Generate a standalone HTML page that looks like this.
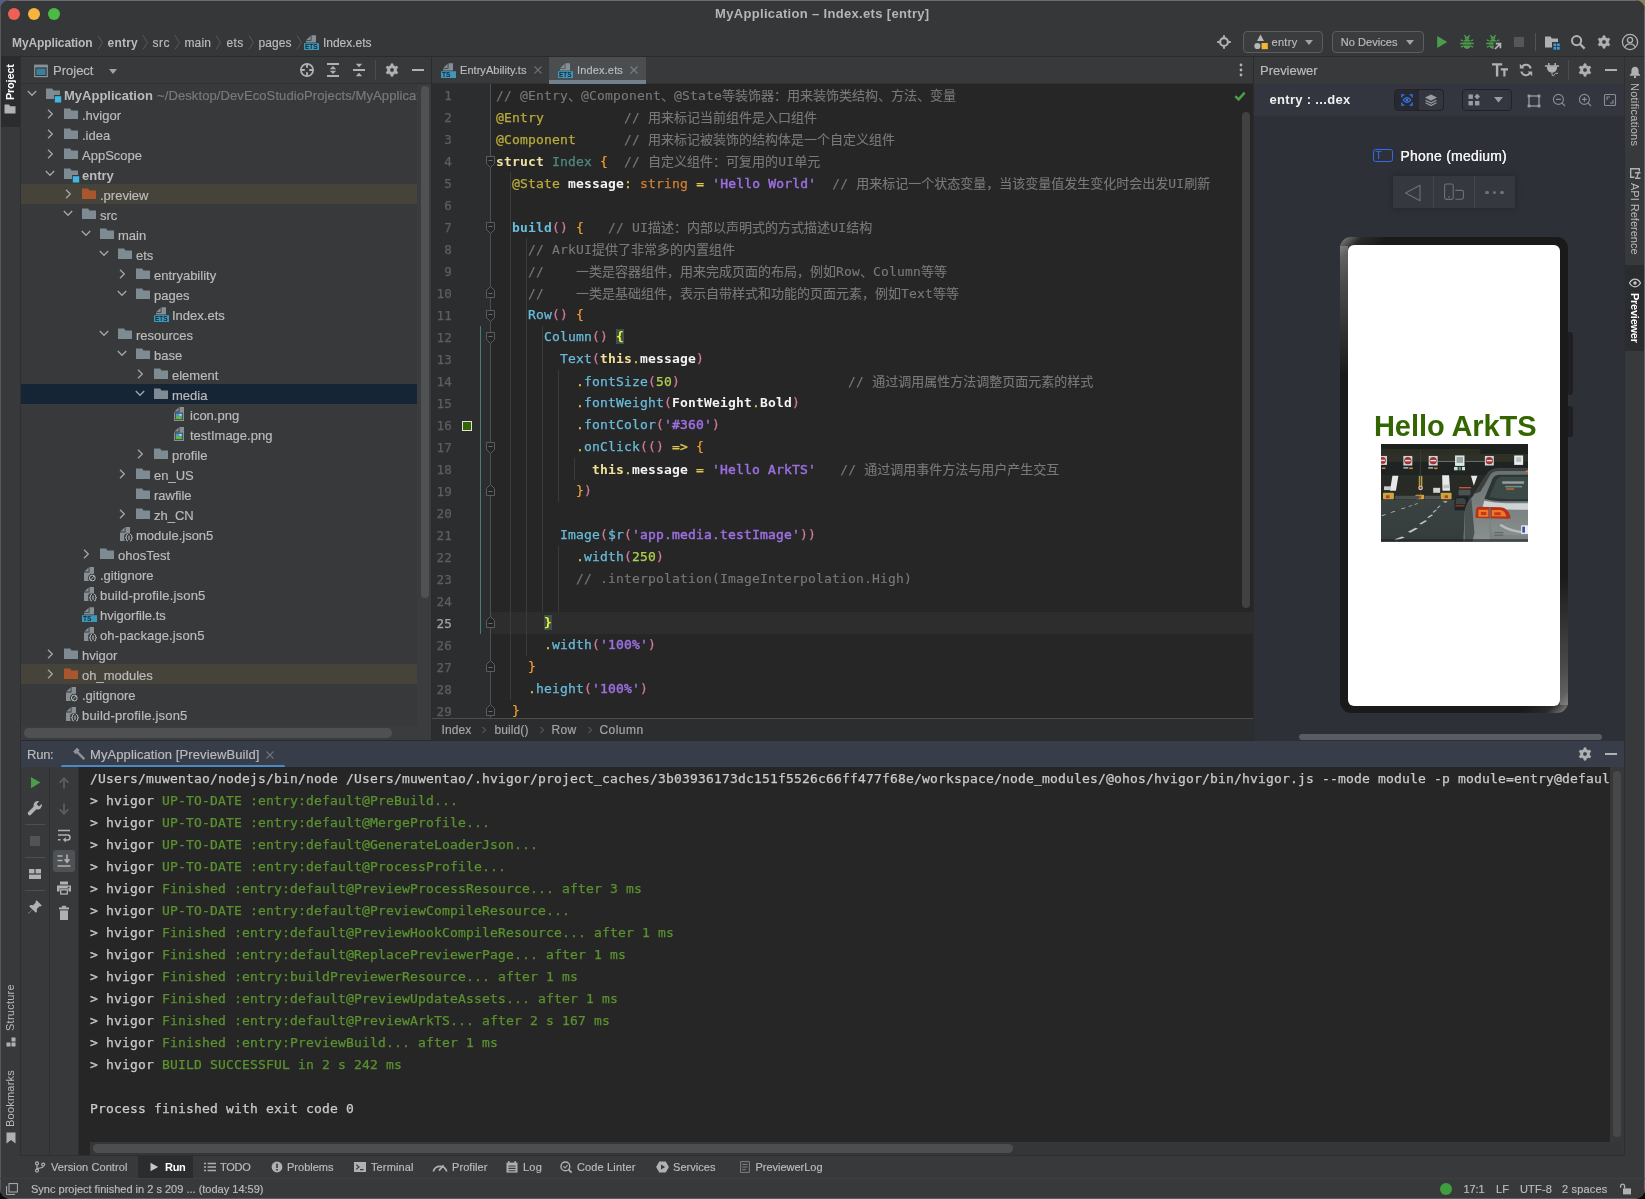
<!DOCTYPE html>
<html><head><meta charset="utf-8"><title>MyApplication – Index.ets [entry]</title>
<style>
*{box-sizing:border-box}
html,body{margin:0;padding:0;background:#0a0a0a;}
body{width:1645px;height:1199px;overflow:hidden;font-family:"Liberation Sans", "Noto Sans CJK SC", sans-serif;font-size:13px;color:#bbbbbb;}
#app{will-change:transform;position:relative;width:1645px;height:1199px;overflow:hidden;background:#38393b;border-radius:10px 10px 10px 10px;}
.b{position:absolute}
.t{position:absolute;white-space:pre;-webkit-text-stroke:0.18px currentColor}
.ic{position:absolute;overflow:visible}
.code,.con{position:absolute;white-space:pre;font-family:"DejaVu Sans Mono", "Liberation Mono", "Noto Sans CJK SC", monospace;font-size:13px;letter-spacing:0.174px;height:22px;line-height:22px;}
.code .c,.con .c{letter-spacing:0;font-family:"Noto Sans CJK SC",sans-serif}
.code,.con{-webkit-text-stroke:0.25px currentColor}
.vt{position:absolute;white-space:pre;transform-origin:0 0;font-size:11px;line-height:14px;}
</style></head>
<body><div style="position:absolute;left:0;top:0;width:12px;height:12px;background:#5c5c86"></div><div style="position:absolute;left:1633px;top:0;width:12px;height:12px;background:#8a8060"></div><div id="app">
<div class="b" style="left:0px;top:0px;width:1645px;height:28px;background:#363739;"></div>
<div class="b" style="left:8px;top:8px;width:12px;height:12px;border-radius:50%;background:#ee5f55"></div>
<div class="b" style="left:28px;top:8px;width:12px;height:12px;border-radius:50%;background:#f5b53c"></div>
<div class="b" style="left:48px;top:8px;width:12px;height:12px;border-radius:50%;background:#4aba45"></div>
<span class="t" style="left:715px;top:3.5px;line-height:20px;font-size:13px;color:#b4b5b6;font-weight:bold;-webkit-text-stroke:0;letter-spacing:0.327px;">MyApplication – Index.ets [entry]</span>
<div class="b" style="left:0px;top:28px;width:1645px;height:28px;background:#363739;"></div>
<div class="b" style="left:0px;top:56px;width:1645px;height:1px;background:#2a2b2d;"></div>
<span class="t" style="left:12px;top:32.5px;line-height:20px;font-size:12px;color:#bbbbbb;font-weight:bold;-webkit-text-stroke:0;letter-spacing:-0.117px;">MyApplication</span>
<span class="t" style="left:107.5px;top:32.5px;line-height:20px;font-size:12px;color:#bbbbbb;font-weight:bold;-webkit-text-stroke:0;letter-spacing:0.231px;">entry</span>
<span class="t" style="left:152.5px;top:32.5px;line-height:20px;font-size:12px;color:#bbbbbb;letter-spacing:0.500px;">src</span>
<span class="t" style="left:184.5px;top:32.5px;line-height:20px;font-size:12px;color:#bbbbbb;letter-spacing:0.121px;">main</span>
<span class="t" style="left:226.5px;top:32.5px;line-height:20px;font-size:12px;color:#bbbbbb;letter-spacing:0.328px;">ets</span>
<span class="t" style="left:258.5px;top:32.5px;line-height:20px;font-size:12px;color:#bbbbbb;letter-spacing:0.059px;">pages</span>
<span class="t" style="left:323px;top:32.5px;line-height:20px;font-size:12px;color:#bbbbbb;letter-spacing:-0.023px;">Index.ets</span>
<svg class="ic" style="left:96.5px;top:35px" width="7" height="15" viewBox="0 0 7 15" ><path d="M1 .5 5.500 7.500 1 14.500" fill="none" stroke="#58595b" stroke-width="1"/></svg>
<svg class="ic" style="left:141.5px;top:35px" width="7" height="15" viewBox="0 0 7 15" ><path d="M1 .5 5.500 7.500 1 14.500" fill="none" stroke="#58595b" stroke-width="1"/></svg>
<svg class="ic" style="left:173.5px;top:35px" width="7" height="15" viewBox="0 0 7 15" ><path d="M1 .5 5.500 7.500 1 14.500" fill="none" stroke="#58595b" stroke-width="1"/></svg>
<svg class="ic" style="left:215px;top:35px" width="7" height="15" viewBox="0 0 7 15" ><path d="M1 .5 5.500 7.500 1 14.500" fill="none" stroke="#58595b" stroke-width="1"/></svg>
<svg class="ic" style="left:247.5px;top:35px" width="7" height="15" viewBox="0 0 7 15" ><path d="M1 .5 5.500 7.500 1 14.500" fill="none" stroke="#58595b" stroke-width="1"/></svg>
<svg class="ic" style="left:295.5px;top:35px" width="7" height="15" viewBox="0 0 7 15" ><path d="M1 .5 5.500 7.500 1 14.500" fill="none" stroke="#58595b" stroke-width="1"/></svg>
<svg class="ic" style="left:303.3px;top:34.5px" width="16" height="16" viewBox="0 0 16 16" ><path d="M8.5 .3H13v7.3H3V5.800h5.500z" fill="#858f95"/><path d="M3.400 4.900 7.600 .700V4.900z" fill="#858f95"/><rect x="1" y="8.2" width="15" height="6.8" fill="#3f96b8"/><text x="2" y="14.1" font-family="Liberation Sans,sans-serif" font-size="6.6" font-weight="bold" fill="#0f2c3a" textLength="12.6" lengthAdjust="spacingAndGlyphs">ETS</text></svg>
<svg class="ic" style="left:1216px;top:34px" width="16" height="16" viewBox="0 0 16 16" ><circle cx="8" cy="8" r="3.900" fill="none" stroke="#afb1b3" stroke-width="2.100"/><path d="M8 1.200v2.400M8 12.400v2.400M1.200 8h2.400M12.400 8h2.400" stroke="#afb1b3" stroke-width="2"/></svg>
<div class="b" style="left:1243px;top:31px;width:80px;height:22px;border:1px solid #5b5d5f;border-radius:4px;background:#3a3c3e"></div>
<svg class="ic" style="left:1252.5px;top:34px" width="16" height="16" viewBox="0 0 16 16" ><path d="M7.500 .600 11 7H4z" fill="#b4b6b8"/><circle cx="4.400" cy="12" r="3.100" fill="#b4b6b8"/><rect x="8.600" y="9" width="6.200" height="6.200" fill="#f0b92e"/></svg>
<span class="t" style="left:1271.5px;top:32.3px;line-height:20px;font-size:11px;color:#bbbbbb;letter-spacing:0.306px;">entry</span>
<svg class="ic" style="left:1305px;top:40px" width="8" height="5" viewBox="0 0 8 5" ><path d="M0 0h8L4.0 5z" fill="#a0a2a4"/></svg>
<div class="b" style="left:1332px;top:31px;width:92px;height:22px;border:1px solid #5b5d5f;border-radius:4px;background:#3a3c3e"></div>
<span class="t" style="left:1340.7px;top:32.3px;line-height:20px;font-size:11px;color:#bbbbbb;letter-spacing:0.055px;">No Devices</span>
<svg class="ic" style="left:1406px;top:40px" width="8" height="5" viewBox="0 0 8 5" ><path d="M0 0h8L4.0 5z" fill="#a0a2a4"/></svg>
<svg class="ic" style="left:1433.5px;top:34px" width="16" height="16" viewBox="0 0 16 16" ><path d="M3.2 2 13.200 8 3.200 14z" fill="#4c9c4c"/></svg>
<svg class="ic" style="left:1459px;top:34.3px" width="16" height="16" viewBox="0 0 16 16" ><path d="M5.400 1.200 6.900 3.400M10.600 1.200 9.100 3.400" stroke="#4c9c4c" stroke-width="1.200"/><path d="M5.600 4.700a2.400 2.200 0 0 1 4.800 0z" fill="#4c9c4c"/><ellipse cx="8" cy="10" rx="4.100" ry="4.900" fill="#4c9c4c"/><path d="M3.500 7.900h9M3.500 11h9" stroke="#38393b" stroke-width="0.900"/><path d="M1.800 5.800 4.300 7M1.200 9.500h3M1.800 13.200 4.300 12M14.200 5.800 11.700 7M14.800 9.500h-3" stroke="#4c9c4c" stroke-width="1.300"/><path d="M14.200 13.200 11.700 12" stroke="#4c9c4c" stroke-width="1.300"/></svg>
<svg class="ic" style="left:1485px;top:34.3px" width="18" height="16" viewBox="0 0 18 16" ><path d="M5.400 1.200 6.900 3.400M10.600 1.200 9.100 3.400" stroke="#4c9c4c" stroke-width="1.200"/><path d="M5.600 4.700a2.400 2.200 0 0 1 4.800 0z" fill="#4c9c4c"/><ellipse cx="8" cy="10" rx="4.100" ry="4.900" fill="#4c9c4c"/><path d="M3.500 7.900h9M3.500 11h9" stroke="#38393b" stroke-width="0.900"/><path d="M1.800 5.800 4.300 7M1.200 9.500h3M1.800 13.200 4.300 12M14.200 5.800 11.700 7M14.800 9.500h-3" stroke="#4c9c4c" stroke-width="1.300"/><rect x="8.600" y="8" width="9" height="8" fill="#38393b"/><path d="M10 15 15 10M10.800 9.600H15.400V14.200" fill="none" stroke="#b4b6b8" stroke-width="1.700"/></svg>
<svg class="ic" style="left:1514px;top:37px" width="10" height="10" viewBox="0 0 10 10" ><rect width="10" height="10" fill="#555759"/></svg>
<div class="b" style="left:1535px;top:33px;width:1px;height:18px;background:#515355;"></div>
<svg class="ic" style="left:1543.5px;top:34px" width="16" height="16" viewBox="0 0 16 16" ><path d="M1 2.5h5.6l1.2 2H14v3.5H8v5.5H1z" fill="#afb1b3"/><rect x="9.5" y="9.5" width="2.7" height="2.7" fill="#3d9bd8"/><rect x="13" y="9.5" width="2.7" height="2.7" fill="#3d9bd8"/><rect x="9.5" y="13" width="2.7" height="2.7" fill="#3d9bd8"/><rect x="13" y="13" width="2.7" height="2.7" fill="#3d9bd8"/></svg>
<svg class="ic" style="left:1569.5px;top:34px" width="16" height="16" viewBox="0 0 16 16" ><circle cx="6.6" cy="6.6" r="4.6" fill="none" stroke="#afb1b3" stroke-width="2"/><path d="M10 10l4.6 4.6" stroke="#afb1b3" stroke-width="2.4"/></svg>
<svg class="ic" style="left:1595.5px;top:34px" width="16" height="16" viewBox="0 0 16 16" ><path d="M6.69 3.49 L7.01 1.78 L8.99 1.78 L9.31 3.49 L11.25 4.61 L12.90 4.04 L13.88 5.74 L12.56 6.88 L12.56 9.12 L13.88 10.26 L12.90 11.96 L11.25 11.39 L9.31 12.51 L8.99 14.22 L7.01 14.22 L6.69 12.51 L4.75 11.39 L3.10 11.96 L2.12 10.26 L3.44 9.12 L3.44 6.88 L2.12 5.74 L3.10 4.04 L4.75 4.61Z M8 5.8a2.2 2.2 0 1 0 0 4.4 2.2 2.2 0 1 0 0-4.4z" fill="#afb1b3" fill-rule="evenodd" stroke="#afb1b3" stroke-width="0.6" stroke-linejoin="round"/></svg>
<svg class="ic" style="left:1621px;top:33px" width="18" height="18" viewBox="0 0 18 18" ><circle cx="9" cy="9" r="7.6" fill="none" stroke="#afb1b3" stroke-width="1.3"/><circle cx="9" cy="7" r="2.6" fill="none" stroke="#afb1b3" stroke-width="1.3"/><path d="M3.8 14.2c1-2.6 3-3.4 5.2-3.4s4.2.8 5.2 3.4" fill="none" stroke="#afb1b3" stroke-width="1.3"/></svg>
<div class="b" style="left:0px;top:57px;width:21px;height:1099px;background:#38393b;"></div>
<div class="b" style="left:20px;top:57px;width:1px;height:1099px;background:#2e2f31;"></div>
<div class="b" style="left:1px;top:57px;width:19px;height:70px;background:#2b2c2e;"></div>
<span class="vt" style="left:2.7px;top:99.5px;transform:rotate(-90deg);color:#ffffff;font-weight:bold;letter-spacing:-0.25px;" >Project</span>
<svg class="ic" style="left:4px;top:103px" width="12" height="12" viewBox="0 0 12 12" ><path d="M0.5 1.5h4.6l1 1.8H11.5v7.2H0.5z" fill="#afb1b3"/></svg>
<span class="vt" style="left:2.7px;top:1031px;transform:rotate(-90deg);color:#bbbbbb;letter-spacing:0.25px;" >Structure</span>
<svg class="ic" style="left:5.5px;top:1036.5px" width="10" height="10" viewBox="0 0 10 10" ><rect x="5.5" y="0.5" width="4" height="4" fill="#afb1b3"/><rect x="0.5" y="5.5" width="4" height="4" fill="#afb1b3"/><rect x="5.5" y="5.5" width="4" height="4" fill="#afb1b3"/></svg>
<span class="vt" style="left:2.7px;top:1127px;transform:rotate(-90deg);color:#bbbbbb;letter-spacing:0.22px;" >Bookmarks</span>
<svg class="ic" style="left:5.5px;top:1131.5px" width="10" height="12" viewBox="0 0 10 12" ><path d="M0.5 0.5h9v11L5 8 0.5 11.5z" fill="#afb1b3"/></svg>
<div class="b" style="left:1625px;top:57px;width:20px;height:1099px;background:#38393b;"></div>
<div class="b" style="left:1624px;top:57px;width:1px;height:1099px;background:#2e2f31;"></div>
<div class="b" style="left:1625px;top:265px;width:20px;height:86px;background:#2b2c2e;"></div>
<svg class="ic" style="left:1628.5px;top:66px" width="12" height="12" viewBox="0 0 12 12" ><path d="M6 0.8c2.4 0 3.6 1.8 3.6 4v2.4l1.6 1.8v.8H.8V9l1.6-1.8V4.8C2.4 2.6 3.6.8 6 .8z" fill="#afb1b3"/><circle cx="6" cy="11" r="1.2" fill="#afb1b3"/></svg>
<span class="vt" style="left:1641.5px;top:83px;transform:rotate(90deg);color:#bbbbbb;letter-spacing:0.25px;">Notifications</span>
<svg class="ic" style="left:1628.5px;top:166.5px" width="12" height="12" viewBox="0 0 12 12" ><path d="M1 1h10v3.5h-1.4V2.4H2.4v7.2h3V11H1z M6 5h5.5v1.4H9.8L8.7 10.6h2.8V12H6v-1.4h1.3L8.4 6.4H6z" fill="#afb1b3"/></svg>
<span class="vt" style="left:1641.5px;top:183px;transform:rotate(90deg);color:#bbbbbb;letter-spacing:0px;">API Reference</span>
<svg class="ic" style="left:1628.5px;top:276.5px" width="12" height="12" viewBox="0 0 12 12" ><path d="M0.5 6C2 3.4 3.8 2.2 6 2.2S10 3.4 11.5 6C10 8.6 8.2 9.8 6 9.8S2 8.6.5 6z" fill="none" stroke="#c8cacc" stroke-width="1.2"/><circle cx="6" cy="6" r="1.7" fill="#c8cacc"/></svg>
<span class="vt" style="left:1641.5px;top:293px;transform:rotate(90deg);color:#ffffff;letter-spacing:-0.25px;font-weight:bold;">Previewer</span>
<div class="b" style="left:21px;top:57px;width:410px;height:27px;background:#38393b;"></div>
<div class="b" style="left:21px;top:83px;width:410px;height:1px;background:#2f3032;"></div>
<div class="b" style="left:431px;top:57px;width:1px;height:684px;background:#2a2b2d;"></div>
<svg class="ic" style="left:33px;top:62.5px" width="16" height="16" viewBox="0 0 16 16" ><rect x="1.700" y="2.200" width="12.600" height="11.400" fill="none" stroke="#8a949b" stroke-width="1.200"/><rect x="1.700" y="2.200" width="12.600" height="2.200" fill="#8a949b"/><rect x="3.400" y="5.600" width="9.200" height="6.400" fill="#3a7f9e"/></svg>
<span class="t" style="left:53px;top:60.5px;line-height:20px;font-size:13px;color:#bbbbbb;letter-spacing:0.004px;">Project</span>
<svg class="ic" style="left:109px;top:68.5px" width="8" height="5" viewBox="0 0 8 5" ><path d="M0 0h8L4.0 5z" fill="#a0a2a4"/></svg>
<svg class="ic" style="left:298.5px;top:62px" width="16" height="16" viewBox="0 0 16 16" ><circle cx="8" cy="8" r="6.100" fill="none" stroke="#afb1b3" stroke-width="1.700"/><path d="M8 1.500v4.300M8 10.200v4.300M1.500 8h4.300M10.200 8h4.300" stroke="#afb1b3" stroke-width="1.900"/></svg>
<svg class="ic" style="left:325px;top:62px" width="16" height="16" viewBox="0 0 16 16" ><path d="M2 2h12M2 14h12" stroke="#afb1b3" stroke-width="2"/><path d="M8 4.100 11.200 7.300H4.800zM8 11.900 11.200 8.700H4.800z" fill="#afb1b3"/></svg>
<svg class="ic" style="left:351px;top:62px" width="16" height="16" viewBox="0 0 16 16" ><path d="M2 8h12" stroke="#afb1b3" stroke-width="2"/><path d="M4.800 1.800h6.400L8 5.200zM4.800 14.200h6.400L8 10.800z" fill="#afb1b3"/></svg>
<div class="b" style="left:375px;top:60px;width:1px;height:20px;background:#4c4d4a;"></div>
<svg class="ic" style="left:384px;top:62px" width="16" height="16" viewBox="0 0 16 16" ><path d="M6.69 3.49 L7.01 1.78 L8.99 1.78 L9.31 3.49 L11.25 4.61 L12.90 4.04 L13.88 5.74 L12.56 6.88 L12.56 9.12 L13.88 10.26 L12.90 11.96 L11.25 11.39 L9.31 12.51 L8.99 14.22 L7.01 14.22 L6.69 12.51 L4.75 11.39 L3.10 11.96 L2.12 10.26 L3.44 9.12 L3.44 6.88 L2.12 5.74 L3.10 4.04 L4.75 4.61Z M8 5.8a2.2 2.2 0 1 0 0 4.4 2.2 2.2 0 1 0 0-4.4z" fill="#afb1b3" fill-rule="evenodd" stroke="#afb1b3" stroke-width="0.6" stroke-linejoin="round"/></svg>
<svg class="ic" style="left:410px;top:62px" width="16" height="16" viewBox="0 0 16 16" ><rect x="2" y="7" width="12" height="2" fill="#afb1b3"/></svg>
<svg class="ic" style="left:26.4px;top:87.3px" width="12" height="12" viewBox="0 0 12 12" ><path d="M1.8 4 6 8.3 10.2 4" fill="none" stroke="#a4a6a8" stroke-width="1.3"/></svg>
<svg class="ic" style="left:45px;top:85.8px" width="16" height="16" viewBox="0 0 16 16" ><path d="M1 2.500h6.200l1.200 2H15v4.600H9v4H1z" fill="#7f8b93"/><rect x="9.800" y="10.200" width="6.400" height="6.300" fill="#40b6e0"/></svg>
<span class="t" style="left:64px;top:85.5px;line-height:20px;font-size:13px;color:#bbbbbb;font-weight:bold;-webkit-text-stroke:0;">MyApplication</span>
<svg class="ic" style="left:44.2px;top:107.5px" width="12" height="12" viewBox="0 0 12 12" ><path d="M4 1.8 8.3 6 4 10.2" fill="none" stroke="#a4a6a8" stroke-width="1.3"/></svg>
<svg class="ic" style="left:63px;top:105.8px" width="16" height="16" viewBox="0 0 16 16" ><path d="M1 2.500h6.200l1.200 2H15v8.600H1z" fill="#7f8b93"/></svg>
<span class="t" style="left:82px;top:105.5px;line-height:20px;font-size:13px;color:#bbbbbb;">.hvigor</span>
<svg class="ic" style="left:44.2px;top:127.5px" width="12" height="12" viewBox="0 0 12 12" ><path d="M4 1.8 8.3 6 4 10.2" fill="none" stroke="#a4a6a8" stroke-width="1.3"/></svg>
<svg class="ic" style="left:63px;top:125.8px" width="16" height="16" viewBox="0 0 16 16" ><path d="M1 2.500h6.200l1.200 2H15v8.600H1z" fill="#7f8b93"/></svg>
<span class="t" style="left:82px;top:125.5px;line-height:20px;font-size:13px;color:#bbbbbb;">.idea</span>
<svg class="ic" style="left:44.2px;top:147.5px" width="12" height="12" viewBox="0 0 12 12" ><path d="M4 1.8 8.3 6 4 10.2" fill="none" stroke="#a4a6a8" stroke-width="1.3"/></svg>
<svg class="ic" style="left:63px;top:145.8px" width="16" height="16" viewBox="0 0 16 16" ><path d="M1 2.500h6.200l1.200 2H15v8.600H1z" fill="#7f8b93"/></svg>
<span class="t" style="left:82px;top:145.5px;line-height:20px;font-size:13px;color:#bbbbbb;">AppScope</span>
<svg class="ic" style="left:44.4px;top:167.3px" width="12" height="12" viewBox="0 0 12 12" ><path d="M1.8 4 6 8.3 10.2 4" fill="none" stroke="#a4a6a8" stroke-width="1.3"/></svg>
<svg class="ic" style="left:63px;top:165.8px" width="16" height="16" viewBox="0 0 16 16" ><path d="M1 2.500h6.200l1.200 2H15v4.600H9v4H1z" fill="#7f8b93"/><rect x="9.800" y="10.200" width="6.400" height="6.300" fill="#40b6e0"/></svg>
<span class="t" style="left:82px;top:165.5px;line-height:20px;font-size:13px;color:#bbbbbb;font-weight:bold;-webkit-text-stroke:0;">entry</span>
<div class="b" style="left:21px;top:184px;width:397px;height:20px;background:#46433b;"></div>
<svg class="ic" style="left:62.2px;top:187.5px" width="12" height="12" viewBox="0 0 12 12" ><path d="M4 1.8 8.3 6 4 10.2" fill="none" stroke="#a4a6a8" stroke-width="1.3"/></svg>
<svg class="ic" style="left:81px;top:185.8px" width="16" height="16" viewBox="0 0 16 16" ><path d="M1 2.500h6.200l1.200 2H15v8.600H1z" fill="#a9562f"/></svg>
<span class="t" style="left:100px;top:185.5px;line-height:20px;font-size:13px;color:#bbbbbb;">.preview</span>
<svg class="ic" style="left:62.4px;top:207.3px" width="12" height="12" viewBox="0 0 12 12" ><path d="M1.8 4 6 8.3 10.2 4" fill="none" stroke="#a4a6a8" stroke-width="1.3"/></svg>
<svg class="ic" style="left:81px;top:205.8px" width="16" height="16" viewBox="0 0 16 16" ><path d="M1 2.500h6.200l1.200 2H15v8.600H1z" fill="#7f8b93"/></svg>
<span class="t" style="left:100px;top:205.5px;line-height:20px;font-size:13px;color:#bbbbbb;">src</span>
<svg class="ic" style="left:80.4px;top:227.3px" width="12" height="12" viewBox="0 0 12 12" ><path d="M1.8 4 6 8.3 10.2 4" fill="none" stroke="#a4a6a8" stroke-width="1.3"/></svg>
<svg class="ic" style="left:99px;top:225.8px" width="16" height="16" viewBox="0 0 16 16" ><path d="M1 2.500h6.200l1.200 2H15v8.600H1z" fill="#7f8b93"/></svg>
<span class="t" style="left:118px;top:225.5px;line-height:20px;font-size:13px;color:#bbbbbb;">main</span>
<svg class="ic" style="left:98.4px;top:247.3px" width="12" height="12" viewBox="0 0 12 12" ><path d="M1.8 4 6 8.3 10.2 4" fill="none" stroke="#a4a6a8" stroke-width="1.3"/></svg>
<svg class="ic" style="left:117px;top:245.8px" width="16" height="16" viewBox="0 0 16 16" ><path d="M1 2.500h6.200l1.200 2H15v8.600H1z" fill="#7f8b93"/></svg>
<span class="t" style="left:136px;top:245.5px;line-height:20px;font-size:13px;color:#bbbbbb;">ets</span>
<svg class="ic" style="left:116.2px;top:267.5px" width="12" height="12" viewBox="0 0 12 12" ><path d="M4 1.8 8.3 6 4 10.2" fill="none" stroke="#a4a6a8" stroke-width="1.3"/></svg>
<svg class="ic" style="left:135px;top:265.8px" width="16" height="16" viewBox="0 0 16 16" ><path d="M1 2.500h6.200l1.200 2H15v8.600H1z" fill="#7f8b93"/></svg>
<span class="t" style="left:154px;top:265.5px;line-height:20px;font-size:13px;color:#bbbbbb;">entryability</span>
<svg class="ic" style="left:116.4px;top:287.3px" width="12" height="12" viewBox="0 0 12 12" ><path d="M1.8 4 6 8.3 10.2 4" fill="none" stroke="#a4a6a8" stroke-width="1.3"/></svg>
<svg class="ic" style="left:135px;top:285.8px" width="16" height="16" viewBox="0 0 16 16" ><path d="M1 2.500h6.200l1.200 2H15v8.600H1z" fill="#7f8b93"/></svg>
<span class="t" style="left:154px;top:285.5px;line-height:20px;font-size:13px;color:#bbbbbb;">pages</span>
<svg class="ic" style="left:153px;top:306.5px" width="16" height="16" viewBox="0 0 16 16" ><path d="M8.5 .3H13v7.3H3V5.800h5.500z" fill="#858f95"/><path d="M3.400 4.900 7.600 .700V4.900z" fill="#858f95"/><rect x="1" y="8.2" width="15" height="6.8" fill="#3f96b8"/><text x="2" y="14.1" font-family="Liberation Sans,sans-serif" font-size="6.6" font-weight="bold" fill="#0f2c3a" textLength="12.6" lengthAdjust="spacingAndGlyphs">ETS</text></svg>
<span class="t" style="left:172px;top:305.5px;line-height:20px;font-size:13px;color:#bbbbbb;">Index.ets</span>
<svg class="ic" style="left:98.4px;top:327.3px" width="12" height="12" viewBox="0 0 12 12" ><path d="M1.8 4 6 8.3 10.2 4" fill="none" stroke="#a4a6a8" stroke-width="1.3"/></svg>
<svg class="ic" style="left:117px;top:325.8px" width="16" height="16" viewBox="0 0 16 16" ><path d="M1 2.500h6.200l1.200 2H15v8.600H1z" fill="#7f8b93"/></svg>
<span class="t" style="left:136px;top:325.5px;line-height:20px;font-size:13px;color:#bbbbbb;">resources</span>
<svg class="ic" style="left:116.4px;top:347.3px" width="12" height="12" viewBox="0 0 12 12" ><path d="M1.8 4 6 8.3 10.2 4" fill="none" stroke="#a4a6a8" stroke-width="1.3"/></svg>
<svg class="ic" style="left:135px;top:345.8px" width="16" height="16" viewBox="0 0 16 16" ><path d="M1 2.500h6.200l1.200 2H15v8.600H1z" fill="#7f8b93"/></svg>
<span class="t" style="left:154px;top:345.5px;line-height:20px;font-size:13px;color:#bbbbbb;">base</span>
<svg class="ic" style="left:134.2px;top:367.5px" width="12" height="12" viewBox="0 0 12 12" ><path d="M4 1.8 8.3 6 4 10.2" fill="none" stroke="#a4a6a8" stroke-width="1.3"/></svg>
<svg class="ic" style="left:153px;top:365.8px" width="16" height="16" viewBox="0 0 16 16" ><path d="M1 2.500h6.200l1.200 2H15v8.600H1z" fill="#7f8b93"/></svg>
<span class="t" style="left:172px;top:365.5px;line-height:20px;font-size:13px;color:#bbbbbb;">element</span>
<div class="b" style="left:21px;top:384px;width:397px;height:20px;background:#162536;"></div>
<svg class="ic" style="left:134.4px;top:387.3px" width="12" height="12" viewBox="0 0 12 12" ><path d="M1.8 4 6 8.3 10.2 4" fill="none" stroke="#a4a6a8" stroke-width="1.3"/></svg>
<svg class="ic" style="left:153px;top:385.8px" width="16" height="16" viewBox="0 0 16 16" ><path d="M1 2.500h6.200l1.200 2H15v8.600H1z" fill="#7f8b93"/></svg>
<span class="t" style="left:172px;top:385.5px;line-height:20px;font-size:13px;color:#bbbbbb;">media</span>
<svg class="ic" style="left:171px;top:405.5px" width="16" height="16" viewBox="0 0 16 16" ><path d="M8.5 1H13v14H3V6.5h5.5z" fill="#858f95"/><path d="M3.4 5.6 7.6 1.4V5.6z" fill="#858f95"/><rect x="4" y="6.800" width="8" height="7.200" fill="#3a3f43"/><rect x="4.700" y="7.500" width="6.600" height="3.600" fill="#3f9fd0"/><path d="M4.700 13.300v-2.400c1.800-1.400 4-1 6.600.800v1.600z" fill="#62b543"/><rect x="8.400" y="8.200" width="2.200" height="1.300" fill="#dcebf2"/></svg>
<span class="t" style="left:190px;top:405.5px;line-height:20px;font-size:13px;color:#bbbbbb;">icon.png</span>
<svg class="ic" style="left:171px;top:425.5px" width="16" height="16" viewBox="0 0 16 16" ><path d="M8.5 1H13v14H3V6.5h5.5z" fill="#858f95"/><path d="M3.4 5.6 7.6 1.4V5.6z" fill="#858f95"/><rect x="4" y="6.800" width="8" height="7.200" fill="#3a3f43"/><rect x="4.700" y="7.500" width="6.600" height="3.600" fill="#3f9fd0"/><path d="M4.700 13.300v-2.400c1.800-1.400 4-1 6.600.800v1.600z" fill="#62b543"/><rect x="8.400" y="8.200" width="2.200" height="1.300" fill="#dcebf2"/></svg>
<span class="t" style="left:190px;top:425.5px;line-height:20px;font-size:13px;color:#bbbbbb;">testImage.png</span>
<svg class="ic" style="left:134.2px;top:447.5px" width="12" height="12" viewBox="0 0 12 12" ><path d="M4 1.8 8.3 6 4 10.2" fill="none" stroke="#a4a6a8" stroke-width="1.3"/></svg>
<svg class="ic" style="left:153px;top:445.8px" width="16" height="16" viewBox="0 0 16 16" ><path d="M1 2.500h6.200l1.200 2H15v8.600H1z" fill="#7f8b93"/></svg>
<span class="t" style="left:172px;top:445.5px;line-height:20px;font-size:13px;color:#bbbbbb;">profile</span>
<svg class="ic" style="left:116.2px;top:467.5px" width="12" height="12" viewBox="0 0 12 12" ><path d="M4 1.8 8.3 6 4 10.2" fill="none" stroke="#a4a6a8" stroke-width="1.3"/></svg>
<svg class="ic" style="left:135px;top:465.8px" width="16" height="16" viewBox="0 0 16 16" ><path d="M1 2.500h6.200l1.200 2H15v8.600H1z" fill="#7f8b93"/></svg>
<span class="t" style="left:154px;top:465.5px;line-height:20px;font-size:13px;color:#bbbbbb;">en_US</span>
<svg class="ic" style="left:135px;top:485.8px" width="16" height="16" viewBox="0 0 16 16" ><path d="M1 2.500h6.200l1.200 2H15v8.600H1z" fill="#7f8b93"/></svg>
<span class="t" style="left:154px;top:485.5px;line-height:20px;font-size:13px;color:#bbbbbb;">rawfile</span>
<svg class="ic" style="left:116.2px;top:507.5px" width="12" height="12" viewBox="0 0 12 12" ><path d="M4 1.8 8.3 6 4 10.2" fill="none" stroke="#a4a6a8" stroke-width="1.3"/></svg>
<svg class="ic" style="left:135px;top:505.8px" width="16" height="16" viewBox="0 0 16 16" ><path d="M1 2.500h6.200l1.200 2H15v8.600H1z" fill="#7f8b93"/></svg>
<span class="t" style="left:154px;top:505.5px;line-height:20px;font-size:13px;color:#bbbbbb;">zh_CN</span>
<svg class="ic" style="left:117px;top:525.5px" width="16" height="16" viewBox="0 0 16 16" ><path d="M8.5 1H13v14H3V6.5h5.5z" fill="#858f95"/><path d="M3.4 5.6 7.6 1.4V5.6z" fill="#858f95"/><rect x="7.2" y="7.6" width="9" height="8" rx="2.5" fill="#38393b"/><path d="M10.9 8.5c-1.3 0-1.5.6-1.5 1.4v.9c0 .6-.4.9-1 .9.6 0 1 .3 1 .9v.9c0 .8.2 1.4 1.5 1.4M13.100 8.500c1.300 0 1.500.600 1.500 1.400v.900c0 .600.400.900 1 .900-.600 0-1 .300-1 .900v.900c0 .800-.200 1.400-1.500 1.400" fill="none" stroke="#c4c8cb" stroke-width="1"/><path d="M12 9.600v4.200" stroke="#c4c8cb" stroke-width="1"/></svg>
<span class="t" style="left:136px;top:525.5px;line-height:20px;font-size:13px;color:#bbbbbb;">module.json5</span>
<svg class="ic" style="left:80.2px;top:547.5px" width="12" height="12" viewBox="0 0 12 12" ><path d="M4 1.8 8.3 6 4 10.2" fill="none" stroke="#a4a6a8" stroke-width="1.3"/></svg>
<svg class="ic" style="left:99px;top:545.8px" width="16" height="16" viewBox="0 0 16 16" ><path d="M1 2.500h6.200l1.200 2H15v8.600H1z" fill="#7f8b93"/></svg>
<span class="t" style="left:118px;top:545.5px;line-height:20px;font-size:13px;color:#bbbbbb;">ohosTest</span>
<svg class="ic" style="left:81px;top:565.5px" width="16" height="16" viewBox="0 0 16 16" ><path d="M8.5 1H13v14H3V6.5h5.5z" fill="#858f95"/><path d="M3.4 5.6 7.6 1.4V5.6z" fill="#858f95"/><circle cx="11.3" cy="12" r="4.300" fill="#38393b"/><circle cx="11.3" cy="12" r="2.900" fill="none" stroke="#c4c8cb" stroke-width="0.900"/><path d="M9.300 14 13.300 10" stroke="#c4c8cb" stroke-width="0.900"/></svg>
<span class="t" style="left:100px;top:565.5px;line-height:20px;font-size:13px;color:#bbbbbb;">.gitignore</span>
<svg class="ic" style="left:81px;top:585.5px" width="16" height="16" viewBox="0 0 16 16" ><path d="M8.5 1H13v14H3V6.5h5.5z" fill="#858f95"/><path d="M3.4 5.6 7.6 1.4V5.6z" fill="#858f95"/><rect x="7.2" y="7.6" width="9" height="8" rx="2.5" fill="#38393b"/><path d="M10.9 8.5c-1.3 0-1.5.6-1.5 1.4v.9c0 .6-.4.9-1 .9.6 0 1 .3 1 .9v.9c0 .8.2 1.4 1.5 1.4M13.100 8.500c1.300 0 1.500.600 1.500 1.400v.900c0 .600.400.900 1 .900-.600 0-1 .300-1 .900v.900c0 .800-.200 1.400-1.500 1.400" fill="none" stroke="#c4c8cb" stroke-width="1"/><path d="M12 9.600v4.200" stroke="#c4c8cb" stroke-width="1"/></svg>
<span class="t" style="left:100px;top:585.5px;line-height:20px;font-size:13px;color:#bbbbbb;letter-spacing:0.189px;">build-profile.json5</span>
<svg class="ic" style="left:81px;top:606.5px" width="16" height="16" viewBox="0 0 16 16" ><path d="M8.5 .3H13v7.3H3V5.800h5.500z" fill="#858f95"/><path d="M3.400 4.900 7.600 .700V4.900z" fill="#858f95"/><rect x="1" y="8.2" width="15" height="6.8" fill="#3f96b8"/><text x="2" y="14.1" font-family="Liberation Sans,sans-serif" font-size="7" font-weight="bold" fill="#0f2c3a" textLength="8.4" lengthAdjust="spacingAndGlyphs">TS</text></svg>
<span class="t" style="left:100px;top:605.5px;line-height:20px;font-size:13px;color:#bbbbbb;">hvigorfile.ts</span>
<svg class="ic" style="left:81px;top:625.5px" width="16" height="16" viewBox="0 0 16 16" ><path d="M8.5 1H13v14H3V6.5h5.5z" fill="#858f95"/><path d="M3.4 5.6 7.6 1.4V5.6z" fill="#858f95"/><rect x="7.2" y="7.6" width="9" height="8" rx="2.5" fill="#38393b"/><path d="M10.9 8.5c-1.3 0-1.5.6-1.5 1.4v.9c0 .6-.4.9-1 .9.6 0 1 .3 1 .9v.9c0 .8.2 1.4 1.5 1.4M13.100 8.500c1.300 0 1.500.600 1.500 1.400v.900c0 .600.400.900 1 .900-.600 0-1 .300-1 .900v.900c0 .800-.200 1.400-1.500 1.400" fill="none" stroke="#c4c8cb" stroke-width="1"/><path d="M12 9.600v4.200" stroke="#c4c8cb" stroke-width="1"/></svg>
<span class="t" style="left:100px;top:625.5px;line-height:20px;font-size:13px;color:#bbbbbb;letter-spacing:0.116px;">oh-package.json5</span>
<svg class="ic" style="left:44.2px;top:647.5px" width="12" height="12" viewBox="0 0 12 12" ><path d="M4 1.8 8.3 6 4 10.2" fill="none" stroke="#a4a6a8" stroke-width="1.3"/></svg>
<svg class="ic" style="left:63px;top:645.8px" width="16" height="16" viewBox="0 0 16 16" ><path d="M1 2.500h6.200l1.200 2H15v8.600H1z" fill="#7f8b93"/></svg>
<span class="t" style="left:82px;top:645.5px;line-height:20px;font-size:13px;color:#bbbbbb;">hvigor</span>
<div class="b" style="left:21px;top:664px;width:397px;height:20px;background:#46433b;"></div>
<svg class="ic" style="left:44.2px;top:667.5px" width="12" height="12" viewBox="0 0 12 12" ><path d="M4 1.8 8.3 6 4 10.2" fill="none" stroke="#a4a6a8" stroke-width="1.3"/></svg>
<svg class="ic" style="left:63px;top:665.8px" width="16" height="16" viewBox="0 0 16 16" ><path d="M1 2.500h6.200l1.200 2H15v8.600H1z" fill="#a9562f"/></svg>
<span class="t" style="left:82px;top:665.5px;line-height:20px;font-size:13px;color:#bbbbbb;">oh_modules</span>
<svg class="ic" style="left:63px;top:685.5px" width="16" height="16" viewBox="0 0 16 16" ><path d="M8.5 1H13v14H3V6.5h5.5z" fill="#858f95"/><path d="M3.4 5.6 7.6 1.4V5.6z" fill="#858f95"/><circle cx="11.3" cy="12" r="4.300" fill="#38393b"/><circle cx="11.3" cy="12" r="2.900" fill="none" stroke="#c4c8cb" stroke-width="0.900"/><path d="M9.300 14 13.300 10" stroke="#c4c8cb" stroke-width="0.900"/></svg>
<span class="t" style="left:82px;top:685.5px;line-height:20px;font-size:13px;color:#bbbbbb;">.gitignore</span>
<svg class="ic" style="left:63px;top:705.5px" width="16" height="16" viewBox="0 0 16 16" ><path d="M8.5 1H13v14H3V6.5h5.5z" fill="#858f95"/><path d="M3.4 5.6 7.6 1.4V5.6z" fill="#858f95"/><rect x="7.2" y="7.6" width="9" height="8" rx="2.5" fill="#38393b"/><path d="M10.9 8.5c-1.3 0-1.5.6-1.5 1.4v.9c0 .6-.4.9-1 .9.6 0 1 .3 1 .9v.9c0 .8.2 1.4 1.5 1.4M13.100 8.500c1.300 0 1.500.600 1.500 1.400v.900c0 .600.400.900 1 .900-.600 0-1 .300-1 .900v.900c0 .800-.200 1.400-1.500 1.400" fill="none" stroke="#c4c8cb" stroke-width="1"/><path d="M12 9.600v4.200" stroke="#c4c8cb" stroke-width="1"/></svg>
<span class="t" style="left:82px;top:705.5px;line-height:20px;font-size:13px;color:#bbbbbb;letter-spacing:0.189px;">build-profile.json5</span>
<div class="b" style="left:157px;top:85px;width:260px;height:20px;overflow:hidden"><span class="t" style="left:0;top:0;line-height:21px;font-size:13px;color:#787a7c;letter-spacing:0.1px">~/Desktop/DevEcoStudioProjects/MyApplication</span></div>
<div class="b" style="left:417px;top:84px;width:14px;height:642px;background:#3b3c3e;"></div>
<div class="b" style="left:21px;top:726px;width:410px;height:14px;background:#3b3c3e;"></div>
<div class="b" style="left:421px;top:86px;width:8px;height:512px;border-radius:4px;background:#4f5153"></div>
<div class="b" style="left:24px;top:728px;width:367.500px;height:9.500px;border-radius:4.750px;background:#4e5052"></div>
<div class="b" style="left:21px;top:740px;width:1603px;height:1px;background:#2a2b2d;"></div>
<div class="b" style="left:432px;top:57px;width:821px;height:27px;background:#38393b;"></div>
<div class="b" style="left:432px;top:83px;width:821px;height:1px;background:#2f3032;"></div>
<svg class="ic" style="left:440px;top:62.5px" width="16" height="16" viewBox="0 0 16 16" ><path d="M8.5 .3H13v7.3H3V5.800h5.500z" fill="#858f95"/><path d="M3.400 4.900 7.600 .700V4.900z" fill="#858f95"/><rect x="1" y="8.2" width="15" height="6.8" fill="#3f96b8"/><text x="2" y="14.1" font-family="Liberation Sans,sans-serif" font-size="7" font-weight="bold" fill="#0f2c3a" textLength="8.4" lengthAdjust="spacingAndGlyphs">TS</text></svg>
<span class="t" style="left:460px;top:60.2px;line-height:20px;font-size:11px;color:#bbbbbb;letter-spacing:0.046px;">EntryAbility.ts</span>
<svg class="ic" style="left:533px;top:65px" width="10" height="10" viewBox="0 0 10 10" ><path d="M1.5 1.5l7 7M8.5 1.5l-7 7" stroke="#6e7073" stroke-width="1.1"/></svg>
<div class="b" style="left:549px;top:57px;width:97px;height:27px;background:#4a4e51;"></div>
<div class="b" style="left:549px;top:80px;width:97px;height:4px;background:#72808c;"></div>
<svg class="ic" style="left:556.5px;top:62.5px" width="16" height="16" viewBox="0 0 16 16" ><path d="M8.5 .3H13v7.3H3V5.800h5.500z" fill="#858f95"/><path d="M3.400 4.900 7.600 .700V4.900z" fill="#858f95"/><rect x="1" y="8.2" width="15" height="6.8" fill="#3f96b8"/><text x="2" y="14.1" font-family="Liberation Sans,sans-serif" font-size="6.6" font-weight="bold" fill="#0f2c3a" textLength="12.6" lengthAdjust="spacingAndGlyphs">ETS</text></svg>
<span class="t" style="left:577px;top:60.2px;line-height:20px;font-size:11px;color:#bbbbbb;letter-spacing:0.151px;">Index.ets</span>
<svg class="ic" style="left:629px;top:65px" width="10" height="10" viewBox="0 0 10 10" ><path d="M1.5 1.5l7 7M8.5 1.5l-7 7" stroke="#7a7c7f" stroke-width="1.1"/></svg>
<svg class="ic" style="left:1237.5px;top:62px" width="6" height="16" viewBox="0 0 6 16" ><circle cx="3" cy="3" r="1.4" fill="#afb1b3"/><circle cx="3" cy="8" r="1.4" fill="#afb1b3"/><circle cx="3" cy="13" r="1.4" fill="#afb1b3"/></svg>
<div class="b" style="left:432px;top:84px;width:821px;height:636px;background:#262626;"></div>
<div class="b" id="ed" style="left:432px;top:84px;width:821px;height:634px;overflow:hidden">
<div class="b" style="left:0;top:0;width:58px;height:636px;background:#2c2d2f"></div>
<div class="b" style="left:58px;top:528px;width:763px;height:22px;background:#2d2d2d"></div>
<div class="b" style="left:58px;top:0;width:1px;height:636px;background:#4e4e4e"></div>
<div class="b" style="left:47.7px;top:242px;width:1.4px;height:308px;background:#4d7a74"></div>
<div class="b" style="left:78px;top:88px;width:1px;height:528px;background:#3a3a3a"></div>
<div class="b" style="left:94px;top:154px;width:1px;height:418px;background:#3a3a3a"></div>
<div class="b" style="left:110px;top:242px;width:1px;height:286px;background:#3a3a3a"></div>
<div class="b" style="left:126px;top:286px;width:1px;height:132px;background:#3a3a3a"></div>
<div class="b" style="left:126px;top:462px;width:1px;height:66px;background:#3a3a3a"></div>
<div class="b" style="left:142px;top:374px;width:1px;height:22px;background:#3a3a3a"></div>
<div class="code" style="left:0;top:1px;width:20px;text-align:right;color:#5c5f62;font-size:12.6px">1</div>
<div class="code" style="left:64px;top:0px;color:#d0d0d0"><span style="color:#797979;-webkit-text-stroke:0.12px #797979">// @Entry<span class="c">、</span>@Component<span class="c">、</span>@State<span class="c">等装饰器：用来装饰类结构、方法、变量</span></span></div>
<div class="code" style="left:0;top:23px;width:20px;text-align:right;color:#5c5f62;font-size:12.6px">2</div>
<div class="code" style="left:64px;top:22px;color:#d0d0d0"><span style="color:#b9ab3a">@Entry</span>          <span style="color:#797979;-webkit-text-stroke:0.12px #797979">// <span class="c">用来标记当前组件是入口组件</span></span></div>
<div class="code" style="left:0;top:45px;width:20px;text-align:right;color:#5c5f62;font-size:12.6px">3</div>
<div class="code" style="left:64px;top:44px;color:#d0d0d0"><span style="color:#b9ab3a">@Component</span>      <span style="color:#797979;-webkit-text-stroke:0.12px #797979">// <span class="c">用来标记被装饰的结构体是一个自定义组件</span></span></div>
<div class="code" style="left:0;top:67px;width:20px;text-align:right;color:#5c5f62;font-size:12.6px">4</div>
<div class="code" style="left:64px;top:66px;color:#d0d0d0"><span style="color:#eee2a0;font-weight:bold;-webkit-text-stroke:0">struct</span> <span style="color:#4f8a80">Index</span> <span style="color:#f0a030">{</span>  <span style="color:#797979;-webkit-text-stroke:0.12px #797979">// <span class="c">自定义组件：可复用的</span>UI<span class="c">单元</span></span></div>
<div class="code" style="left:0;top:89px;width:20px;text-align:right;color:#5c5f62;font-size:12.6px">5</div>
<div class="code" style="left:64px;top:88px;color:#d0d0d0">  <span style="color:#b9ab3a">@State</span> <span style="color:#f2f2f2;font-weight:bold;-webkit-text-stroke:0">message</span><span style="color:#e0c850">:</span> <span style="color:#d08030">string</span> <span style="color:#e0c850">=</span> <span style="color:#9d70e2;-webkit-text-stroke:0.45px #9d70e2">'Hello World'</span>  <span style="color:#797979;-webkit-text-stroke:0.12px #797979">// <span class="c">用来标记一个状态变量，当该变量值发生变化时会出发</span>UI<span class="c">刷新</span></span></div>
<div class="code" style="left:0;top:111px;width:20px;text-align:right;color:#5c5f62;font-size:12.6px">6</div>
<div class="code" style="left:0;top:133px;width:20px;text-align:right;color:#5c5f62;font-size:12.6px">7</div>
<div class="code" style="left:64px;top:132px;color:#d0d0d0">  <span style="color:#69bcdc;font-weight:bold;-webkit-text-stroke:0">build</span><span style="color:#d1789b">()</span> <span style="color:#f0a030">{</span>   <span style="color:#797979;-webkit-text-stroke:0.12px #797979">// UI<span class="c">描述：内部以声明式的方式描述</span>UI<span class="c">结构</span></span></div>
<div class="code" style="left:0;top:155px;width:20px;text-align:right;color:#5c5f62;font-size:12.6px">8</div>
<div class="code" style="left:64px;top:154px;color:#d0d0d0">    <span style="color:#797979;-webkit-text-stroke:0.12px #797979">// ArkUI<span class="c">提供了非常多的内置组件</span></span></div>
<div class="code" style="left:0;top:177px;width:20px;text-align:right;color:#5c5f62;font-size:12.6px">9</div>
<div class="code" style="left:64px;top:176px;color:#d0d0d0">    <span style="color:#797979;-webkit-text-stroke:0.12px #797979">//    <span class="c">一类是容器组件，用来完成页面的布局，例如</span>Row<span class="c">、</span>Column<span class="c">等等</span></span></div>
<div class="code" style="left:0;top:199px;width:20px;text-align:right;color:#5c5f62;font-size:12.6px">10</div>
<div class="code" style="left:64px;top:198px;color:#d0d0d0">    <span style="color:#797979;-webkit-text-stroke:0.12px #797979">//    <span class="c">一类是基础组件，表示自带样式和功能的页面元素，例如</span>Text<span class="c">等等</span></span></div>
<div class="code" style="left:0;top:221px;width:20px;text-align:right;color:#5c5f62;font-size:12.6px">11</div>
<div class="code" style="left:64px;top:220px;color:#d0d0d0">    <span style="color:#69bcdc">Row</span><span style="color:#d1789b">()</span> <span style="color:#f0a030">{</span></div>
<div class="code" style="left:0;top:243px;width:20px;text-align:right;color:#5c5f62;font-size:12.6px">12</div>
<div class="code" style="left:64px;top:242px;color:#d0d0d0">      <span style="color:#69bcdc">Column</span><span style="color:#d1789b">()</span> <span style="color:#ffef28;font-weight:bold;-webkit-text-stroke:0;background:#3b514d">{</span></div>
<div class="code" style="left:0;top:265px;width:20px;text-align:right;color:#5c5f62;font-size:12.6px">13</div>
<div class="code" style="left:64px;top:264px;color:#d0d0d0">        <span style="color:#69bcdc">Text</span><span style="color:#d1789b">(</span><span style="color:#f0e196;font-weight:bold;-webkit-text-stroke:0">this</span><span style="color:#e0c850">.</span><span style="color:#f2f2f2;font-weight:bold;-webkit-text-stroke:0">message</span><span style="color:#d1789b">)</span></div>
<div class="code" style="left:0;top:287px;width:20px;text-align:right;color:#5c5f62;font-size:12.6px">14</div>
<div class="code" style="left:64px;top:286px;color:#d0d0d0">          <span style="color:#e0c850">.</span><span style="color:#69bcdc">fontSize</span><span style="color:#d1789b">(</span><span style="color:#afd250">50</span><span style="color:#d1789b">)</span>                     <span style="color:#797979;-webkit-text-stroke:0.12px #797979">// <span class="c">通过调用属性方法调整页面元素的样式</span></span></div>
<div class="code" style="left:0;top:309px;width:20px;text-align:right;color:#5c5f62;font-size:12.6px">15</div>
<div class="code" style="left:64px;top:308px;color:#d0d0d0">          <span style="color:#e0c850">.</span><span style="color:#69bcdc">fontWeight</span><span style="color:#d1789b">(</span><span style="color:#f2f2f2;font-weight:bold;-webkit-text-stroke:0">FontWeight</span><span style="color:#e0c850">.</span><span style="color:#f2f2f2;font-weight:bold;-webkit-text-stroke:0">Bold</span><span style="color:#d1789b">)</span></div>
<div class="code" style="left:0;top:331px;width:20px;text-align:right;color:#5c5f62;font-size:12.6px">16</div>
<div class="code" style="left:64px;top:330px;color:#d0d0d0">          <span style="color:#e0c850">.</span><span style="color:#69bcdc">fontColor</span><span style="color:#d1789b">(</span><span style="color:#9d70e2;-webkit-text-stroke:0.45px #9d70e2">'#360'</span><span style="color:#d1789b">)</span></div>
<div class="code" style="left:0;top:353px;width:20px;text-align:right;color:#5c5f62;font-size:12.6px">17</div>
<div class="code" style="left:64px;top:352px;color:#d0d0d0">          <span style="color:#e0c850">.</span><span style="color:#69bcdc">onClick</span><span style="color:#d1789b">(()</span> <span style="color:#e0c850">=&gt;</span> <span style="color:#f0a030">{</span></div>
<div class="code" style="left:0;top:375px;width:20px;text-align:right;color:#5c5f62;font-size:12.6px">18</div>
<div class="code" style="left:64px;top:374px;color:#d0d0d0">            <span style="color:#f0e196;font-weight:bold;-webkit-text-stroke:0">this</span><span style="color:#e0c850">.</span><span style="color:#f2f2f2;font-weight:bold;-webkit-text-stroke:0">message</span> <span style="color:#e0c850">=</span> <span style="color:#9d70e2;-webkit-text-stroke:0.45px #9d70e2">'Hello ArkTS'</span>   <span style="color:#797979;-webkit-text-stroke:0.12px #797979">// <span class="c">通过调用事件方法与用户产生交互</span></span></div>
<div class="code" style="left:0;top:397px;width:20px;text-align:right;color:#5c5f62;font-size:12.6px">19</div>
<div class="code" style="left:64px;top:396px;color:#d0d0d0">          <span style="color:#f0a030">}</span><span style="color:#d1789b">)</span></div>
<div class="code" style="left:0;top:419px;width:20px;text-align:right;color:#5c5f62;font-size:12.6px">20</div>
<div class="code" style="left:0;top:441px;width:20px;text-align:right;color:#5c5f62;font-size:12.6px">21</div>
<div class="code" style="left:64px;top:440px;color:#d0d0d0">        <span style="color:#69bcdc">Image</span><span style="color:#d1789b">(</span><span style="color:#69bcdc">$r</span><span style="color:#d1789b">(</span><span style="color:#9d70e2;-webkit-text-stroke:0.45px #9d70e2">'app.media.testImage'</span><span style="color:#d1789b">))</span></div>
<div class="code" style="left:0;top:463px;width:20px;text-align:right;color:#5c5f62;font-size:12.6px">22</div>
<div class="code" style="left:64px;top:462px;color:#d0d0d0">          <span style="color:#e0c850">.</span><span style="color:#69bcdc">width</span><span style="color:#d1789b">(</span><span style="color:#afd250">250</span><span style="color:#d1789b">)</span></div>
<div class="code" style="left:0;top:485px;width:20px;text-align:right;color:#5c5f62;font-size:12.6px">23</div>
<div class="code" style="left:64px;top:484px;color:#d0d0d0">          <span style="color:#797979;-webkit-text-stroke:0.12px #797979">// .interpolation(ImageInterpolation.High)</span></div>
<div class="code" style="left:0;top:507px;width:20px;text-align:right;color:#5c5f62;font-size:12.6px">24</div>
<div class="code" style="left:0;top:529px;width:20px;text-align:right;color:#a4a3a3;font-size:12.6px">25</div>
<div class="code" style="left:64px;top:528px;color:#d0d0d0">      <span style="color:#ffef28;font-weight:bold;-webkit-text-stroke:0;background:#3b514d">}</span></div>
<div class="code" style="left:0;top:551px;width:20px;text-align:right;color:#5c5f62;font-size:12.6px">26</div>
<div class="code" style="left:64px;top:550px;color:#d0d0d0">      <span style="color:#e0c850">.</span><span style="color:#69bcdc">width</span><span style="color:#d1789b">(</span><span style="color:#9d70e2;-webkit-text-stroke:0.45px #9d70e2">'100%'</span><span style="color:#d1789b">)</span></div>
<div class="code" style="left:0;top:573px;width:20px;text-align:right;color:#5c5f62;font-size:12.6px">27</div>
<div class="code" style="left:64px;top:572px;color:#d0d0d0">    <span style="color:#f0a030">}</span></div>
<div class="code" style="left:0;top:595px;width:20px;text-align:right;color:#5c5f62;font-size:12.6px">28</div>
<div class="code" style="left:64px;top:594px;color:#d0d0d0">    <span style="color:#e0c850">.</span><span style="color:#69bcdc">height</span><span style="color:#d1789b">(</span><span style="color:#9d70e2;-webkit-text-stroke:0.45px #9d70e2">'100%'</span><span style="color:#d1789b">)</span></div>
<div class="code" style="left:0;top:617px;width:20px;text-align:right;color:#5c5f62;font-size:12.6px">29</div>
<div class="code" style="left:64px;top:616px;color:#d0d0d0">  <span style="color:#f0a030">}</span></div>
<svg class="ic" style="left:54px;top:72px" width="9" height="12" viewBox="0 0 9 12"><path d="M0.5 0.5h8v7L4.5 11.5 0.5 7.5z" fill="#242526" stroke="#5c5c5c" stroke-width="1"/><path d="M2.5 4.5h4" stroke="#6a6a6a" stroke-width="1"/></svg>
<svg class="ic" style="left:54px;top:138px" width="9" height="12" viewBox="0 0 9 12"><path d="M0.5 0.5h8v7L4.5 11.5 0.5 7.5z" fill="#242526" stroke="#5c5c5c" stroke-width="1"/><path d="M2.5 4.5h4" stroke="#6a6a6a" stroke-width="1"/></svg>
<svg class="ic" style="left:54px;top:202px" width="9" height="12" viewBox="0 0 9 12"><path d="M0.5 11.5h8v-7L4.5 0.5 0.5 4.5z" fill="#242526" stroke="#5c5c5c" stroke-width="1"/><path d="M2.5 7.5h4" stroke="#6a6a6a" stroke-width="1"/></svg>
<svg class="ic" style="left:54px;top:226px" width="9" height="12" viewBox="0 0 9 12"><path d="M0.5 0.5h8v7L4.5 11.5 0.5 7.5z" fill="#242526" stroke="#5c5c5c" stroke-width="1"/><path d="M2.5 4.5h4" stroke="#6a6a6a" stroke-width="1"/></svg>
<svg class="ic" style="left:54px;top:248px" width="9" height="12" viewBox="0 0 9 12"><path d="M0.5 0.5h8v7L4.5 11.5 0.5 7.5z" fill="#242526" stroke="#5c5c5c" stroke-width="1"/><path d="M2.5 4.5h4" stroke="#6a6a6a" stroke-width="1"/></svg>
<svg class="ic" style="left:54px;top:358px" width="9" height="12" viewBox="0 0 9 12"><path d="M0.5 0.5h8v7L4.5 11.5 0.5 7.5z" fill="#242526" stroke="#5c5c5c" stroke-width="1"/><path d="M2.5 4.5h4" stroke="#6a6a6a" stroke-width="1"/></svg>
<svg class="ic" style="left:54px;top:400px" width="9" height="12" viewBox="0 0 9 12"><path d="M0.5 11.5h8v-7L4.5 0.5 0.5 4.5z" fill="#242526" stroke="#5c5c5c" stroke-width="1"/><path d="M2.5 7.5h4" stroke="#6a6a6a" stroke-width="1"/></svg>
<svg class="ic" style="left:54px;top:532px" width="9" height="12" viewBox="0 0 9 12"><path d="M0.5 11.5h8v-7L4.5 0.5 0.5 4.5z" fill="#242526" stroke="#5c5c5c" stroke-width="1"/><path d="M2.5 7.5h4" stroke="#6a6a6a" stroke-width="1"/></svg>
<svg class="ic" style="left:54px;top:576px" width="9" height="12" viewBox="0 0 9 12"><path d="M0.5 11.5h8v-7L4.5 0.5 0.5 4.5z" fill="#242526" stroke="#5c5c5c" stroke-width="1"/><path d="M2.5 7.5h4" stroke="#6a6a6a" stroke-width="1"/></svg>
<svg class="ic" style="left:54px;top:620px" width="9" height="12" viewBox="0 0 9 12"><path d="M0.5 11.5h8v-7L4.5 0.5 0.5 4.5z" fill="#242526" stroke="#5c5c5c" stroke-width="1"/><path d="M2.5 7.5h4" stroke="#6a6a6a" stroke-width="1"/></svg>
<div class="b" style="left:29.5px;top:336.5px;width:10px;height:10px;background:#336600;border:1px solid #e0e0e0"></div>
</div>
<svg class="ic" style="left:1234px;top:90px" width="12" height="12" viewBox="0 0 12 12" ><path d="M1.300 6.200 4.600 9.400 10.700 2.600" fill="none" stroke="#4b9e4a" stroke-width="2.400"/></svg>
<div class="b" style="left:1242px;top:112px;width:8px;height:496px;border-radius:4px;background:#414141"></div>
<div class="b" style="left:432px;top:719px;width:821px;height:21px;background:#2c2d2f;"></div>
<div class="b" style="left:432px;top:718px;width:821px;height:1px;background:#4e4e4e;"></div>
<span class="t" style="left:441.5px;top:720px;line-height:20px;font-size:12px;color:#a4a6a8;letter-spacing:0.128px;">Index</span>
<span class="t" style="left:494.5px;top:720px;line-height:20px;font-size:12px;color:#a4a6a8;letter-spacing:0.092px;">build()</span>
<span class="t" style="left:551.5px;top:720px;line-height:20px;font-size:12px;color:#a4a6a8;letter-spacing:0.328px;">Row</span>
<span class="t" style="left:599.5px;top:720px;line-height:20px;font-size:12px;color:#a4a6a8;letter-spacing:0.440px;">Column</span>
<svg class="ic" style="left:481px;top:725.5px" width="6" height="8" viewBox="0 0 6 8" ><path d="M1.5 1 4.5 4 1.5 7" fill="none" stroke="#6a6c6e" stroke-width="1"/></svg>
<svg class="ic" style="left:539px;top:725.5px" width="6" height="8" viewBox="0 0 6 8" ><path d="M1.5 1 4.5 4 1.5 7" fill="none" stroke="#6a6c6e" stroke-width="1"/></svg>
<svg class="ic" style="left:586.5px;top:725.5px" width="6" height="8" viewBox="0 0 6 8" ><path d="M1.5 1 4.5 4 1.5 7" fill="none" stroke="#6a6c6e" stroke-width="1"/></svg>
<div class="b" style="left:1253px;top:57px;width:1px;height:684px;background:#2a2b2d;"></div>
<div class="b" style="left:1254px;top:57px;width:370px;height:27px;background:#38393b;"></div>
<span class="t" style="left:1260px;top:60.5px;line-height:20px;font-size:13px;color:#bbbbbb;letter-spacing:-0.033px;">Previewer</span>
<svg class="ic" style="left:1490.5px;top:62px" width="18" height="16" viewBox="0 0 18 16" ><path d="M1 1.300h10.200v2.300H7.300V14.500H4.900V3.600H1zM9.800 6.300H17v2.100H14.500V14.500h-2.200V8.400H9.800z" fill="#afb1b3"/></svg>
<svg class="ic" style="left:1518px;top:62px" width="16" height="16" viewBox="0 0 16 16" ><path d="M12.700 6.400A4.900 4.900 0 0 0 4 4.800M3.300 9.600a4.900 4.900 0 0 0 8.700 1.600" fill="none" stroke="#afb1b3" stroke-width="2"/><path d="M1.800 1.800v4.600h4.600zM14.200 14.200V9.600H9.600z" fill="#afb1b3"/></svg>
<svg class="ic" style="left:1544px;top:62px" width="16" height="16" viewBox="0 0 16 16" ><path d="M1 4h14" stroke="#afb1b3" stroke-width="1.500"/><path d="M4.800 1v3M11.200 1v3" stroke="#afb1b3" stroke-width="1.500"/><path d="M3 4.600h10v.800c0 3-2.200 5-5 5s-5-2-5-5z" fill="#afb1b3"/><path d="M8 10v2.200c0 2 2 2 2.400.600.300-1.200 1-1.500 1.800-1.500H14" fill="none" stroke="#afb1b3" stroke-width="1"/></svg>
<div class="b" style="left:1568px;top:60px;width:1px;height:20px;background:#4c4d4a;"></div>
<svg class="ic" style="left:1576.5px;top:62px" width="16" height="16" viewBox="0 0 16 16" ><path d="M6.69 3.49 L7.01 1.78 L8.99 1.78 L9.31 3.49 L11.25 4.61 L12.90 4.04 L13.88 5.74 L12.56 6.88 L12.56 9.12 L13.88 10.26 L12.90 11.96 L11.25 11.39 L9.31 12.51 L8.99 14.22 L7.01 14.22 L6.69 12.51 L4.75 11.39 L3.10 11.96 L2.12 10.26 L3.44 9.12 L3.44 6.88 L2.12 5.74 L3.10 4.04 L4.75 4.61Z M8 5.8a2.2 2.2 0 1 0 0 4.4 2.2 2.2 0 1 0 0-4.4z" fill="#afb1b3" fill-rule="evenodd" stroke="#afb1b3" stroke-width="0.6" stroke-linejoin="round"/></svg>
<svg class="ic" style="left:1602.5px;top:62px" width="16" height="16" viewBox="0 0 16 16" ><rect x="2" y="7" width="12" height="2" fill="#afb1b3"/></svg>
<div class="b" style="left:1254px;top:84px;width:370px;height:32px;background:#33363e;"></div>
<span class="t" style="left:1269.5px;top:90px;line-height:20px;font-size:13px;color:#f0f0f0;font-weight:bold;-webkit-text-stroke:0;letter-spacing:0.316px;">entry : ...dex</span>
<div class="b" style="left:1394px;top:89px;width:50px;height:22px;border:1px solid #202227;border-radius:4px;background:#33363e"></div>
<div class="b" style="left:1395px;top:90px;width:24px;height:20px;border-radius:3px 0 0 3px;background:#262930"></div>
<svg class="ic" style="left:1400.5px;top:94px" width="12" height="12" viewBox="0 0 14 14" ><path d="M1 4V1h3M10 1h3v3M13 10v3h-3M4 13H1v-3" fill="none" stroke="#3a78f2" stroke-width="1.500"/><path d="M2.600 7C4 5 5.400 4.200 7 4.200S10 5 11.400 7C10 9 8.600 9.800 7 9.800S4 9 2.600 7z" fill="none" stroke="#3a78f2" stroke-width="1.400"/><circle cx="7" cy="7" r="1.600" fill="#3a78f2"/></svg>
<svg class="ic" style="left:1423.5px;top:93px" width="14" height="14" viewBox="0 0 14 14" ><path d="M7 1.5 13 4.6 7 7.7 1 4.6z" fill="#9a9ca2"/><path d="M1.5 7.2 7 10l5.5-2.8M1.5 9.8 7 12.6l5.5-2.8" fill="none" stroke="#9a9ca2" stroke-width="1.2"/></svg>
<div class="b" style="left:1462px;top:89px;width:50px;height:22px;border:1px solid #202227;border-radius:4px;background:#33363e"></div>
<svg class="ic" style="left:1467px;top:93px" width="14" height="14" viewBox="0 0 14 14" ><rect x="1.5" y="1.5" width="4.4" height="4.4" fill="#9a9ca2"/><rect x="1.5" y="8" width="4.4" height="4.4" fill="#9a9ca2"/><rect x="8" y="8" width="4.4" height="4.4" fill="#9a9ca2"/><path d="M10.2 0.8 13 3.6 10.2 6.4 7.4 3.6z" fill="#9a9ca2"/></svg>
<svg class="ic" style="left:1494px;top:97.25px" width="9" height="5.5" viewBox="0 0 9 5.5" ><path d="M0 0h9L4.5 5.5z" fill="#9a9ca2"/></svg>
<svg class="ic" style="left:1527px;top:93.5px" width="14" height="14" viewBox="0 0 14 14" ><rect x="2" y="2" width="10" height="10" fill="none" stroke="#9a9ca2" stroke-width="1.300"/><rect x=".600" y=".600" width="2.800" height="2.800" fill="#9a9ca2"/><rect x="10.600" y=".600" width="2.800" height="2.800" fill="#9a9ca2"/><rect x=".600" y="10.600" width="2.800" height="2.800" fill="#9a9ca2"/><rect x="10.600" y="10.600" width="2.800" height="2.800" fill="#9a9ca2"/></svg>
<svg class="ic" style="left:1552px;top:93px" width="14" height="14" viewBox="0 0 14 14" ><circle cx="6.4" cy="6.4" r="5" fill="none" stroke="#8a8c92" stroke-width="1.1"/><path d="M4 6.4h4.8M10 10l3 3" stroke="#8a8c92" stroke-width="1.1"/></svg>
<svg class="ic" style="left:1578px;top:93px" width="14" height="14" viewBox="0 0 14 14" ><circle cx="6.4" cy="6.4" r="5" fill="none" stroke="#8a8c92" stroke-width="1.1"/><path d="M4 6.4h4.8M6.4 4v4.8M10 10l3 3" stroke="#8a8c92" stroke-width="1.1"/></svg>
<svg class="ic" style="left:1603px;top:92.5px" width="14" height="14" viewBox="0 0 14 14" ><rect x="1.5" y="1.5" width="11" height="11" rx="1" fill="none" stroke="#8a8c92" stroke-width="1.1"/><path d="M4 7V4h3M10 7v3H7" fill="none" stroke="#8a8c92" stroke-width="1.1"/></svg>
<div class="b" style="left:1254px;top:116px;width:370px;height:625px;background:#2e3038;"></div>
<div class="b" style="left:1373px;top:148.700px;width:20.200px;height:13px;border:1.500px solid #2f6df0;border-radius:2.500px"></div>
<span class="t" style="left:1375.5px;top:145.8px;line-height:20px;font-size:10px;color:#2f6df0;">T</span>
<span class="t" style="left:1400.5px;top:146px;line-height:20px;font-size:14px;color:#f2f2f2;letter-spacing:0.214px;text-shadow:0 0 0.4px #f2f2f2;">Phone (medium)</span>
<div class="b" style="left:1393px;top:176px;width:122px;height:32px;background:#363840;box-shadow:0 0 6px rgba(0,0,0,.25)"></div>
<div class="b" style="left:1433px;top:176px;width:1px;height:32px;background:#44464e;"></div>
<div class="b" style="left:1474px;top:176px;width:1px;height:32px;background:#44464e;"></div>
<svg class="ic" style="left:1403.5px;top:183.5px" width="18" height="18" viewBox="0 0 18 18" ><path d="M16 1.2v15.6L1.6 9z" fill="none" stroke="#6e7078" stroke-width="1.1" stroke-linejoin="round"/></svg>
<svg class="ic" style="left:1443px;top:183px" width="22" height="18" viewBox="0 0 22 18" ><rect x="1.6" y="1" width="8.6" height="15.4" rx="1.6" fill="none" stroke="#6e7078" stroke-width="1.1"/><path d="M5 14h2" stroke="#6e7078" stroke-width="1"/><path d="M12.4 7.4h6.4a1.6 1.6 0 0 1 1.6 1.6v5.6a1.6 1.6 0 0 1-1.6 1.6h-6.4" fill="none" stroke="#6e7078" stroke-width="1.1"/></svg>
<div class="b" style="left:1485.2px;top:190.8px;width:3.6px;height:3.6px;border-radius:50%;background:#70727a"></div>
<div class="b" style="left:1492.7px;top:190.8px;width:3.6px;height:3.6px;border-radius:50%;background:#70727a"></div>
<div class="b" style="left:1500.2px;top:190.8px;width:3.6px;height:3.6px;border-radius:50%;background:#70727a"></div>
<div class="b" style="left:1568px;top:332px;width:5px;height:63px;border-radius:0 3px 3px 0;background:#1f1f21"></div>
<div class="b" style="left:1568px;top:406px;width:5px;height:31px;border-radius:0 3px 3px 0;background:#1f1f21"></div>
<div class="b" style="left:1340px;top:236.5px;width:228px;height:476.5px;border-radius:11px;background:linear-gradient(135deg,#8c8c8c 0%,#2a2a2a 3.2%,#1a1a1a 7%,#1a1a1a 93%,#2a2a2a 96.8%,#8c8c8c 100%)"></div>
<div class="b" style="left:1340px;top:246px;width:8px;height:130px;background:linear-gradient(180deg,rgba(150,150,150,.55),rgba(150,150,150,0))"></div>
<div class="b" style="left:1560px;top:575px;width:8px;height:130px;background:linear-gradient(0deg,rgba(150,150,150,.55),rgba(150,150,150,0))"></div>
<div class="b" style="left:1347.8px;top:245px;width:212.4px;height:461px;border-radius:6px;background:#ffffff"></div>
<span class="t" style="left:1374px;top:409px;line-height:34px;font-size:29px;color:#336600;font-weight:bold;-webkit-text-stroke:0;letter-spacing:-0.072px;">Hello ArkTS</span>
<svg class="ic" style="left:1380.800px;top:444px;overflow:hidden" width="147.100" height="97.600" viewBox="0 0 148 98" preserveAspectRatio="none">
<defs><linearGradient id="rd" x1="0" y1="0" x2="0" y2="1"><stop offset="0" stop-color="#3a4242"/><stop offset="1" stop-color="#343c3c"/></linearGradient>
<linearGradient id="car" x1="0" y1="0" x2="0" y2="1"><stop offset="0" stop-color="#6a7070"/><stop offset="1" stop-color="#8a8f90"/></linearGradient></defs>
<rect width="148" height="98" fill="#242a28"/>
<rect y="0" width="148" height="12" fill="#1e221e"/><rect y="5" width="100" height="8" fill="#2c2e24"/>
<rect y="10" width="148" height="9" fill="#2f3128"/>
<rect y="18" width="148" height="13" fill="#1f2322"/>
<rect y="31" width="148" height="26" fill="#282a26"/>
<rect y="56" width="148" height="42" fill="url(#rd)"/>
<rect x="57" y="17" width="18" height="0.800" fill="#7a8282"/><rect x="85" y="17" width="20" height="0.800" fill="#7a8282"/><!-- signs -->
<g>
<rect x="-2" y="12" width="8" height="9" fill="#cfd6da"/><circle cx="1.5" cy="16.5" r="3.4" fill="#a03232"/><rect x="-1" y="15.8" width="5" height="1.4" fill="#e8dede"/>
<rect x="22.5" y="12" width="9" height="9.6" fill="#cfd6da"/><circle cx="27" cy="16.7" r="3.6" fill="#a03232"/><rect x="24.2" y="16" width="5.6" height="1.4" fill="#e8dede"/>
<rect x="48" y="12" width="9" height="9.6" fill="#cfd6da"/><circle cx="52.5" cy="16.7" r="3.6" fill="#a03232"/><rect x="49.7" y="16" width="5.6" height="1.4" fill="#e8dede"/>
<rect x="74.5" y="11.5" width="9.5" height="10.5" fill="#dfe6e6"/><rect x="76" y="13" width="6.5" height="6" fill="#9aa8a4"/>
<rect x="104.5" y="12" width="9" height="9.6" fill="#cfd6da"/><circle cx="109" cy="16.7" r="3.6" fill="#a03232"/><rect x="106.2" y="16" width="5.6" height="1.4" fill="#e8dede"/>
<rect x="134" y="11.5" width="9" height="9.5" fill="#e6ecec"/><rect x="136" y="13.4" width="5" height="4.6" fill="#b8c0c0"/>
</g>
<!-- small lights under signs -->
<rect x="22.5" y="23.4" width="5" height="1.2" fill="#d8dcd8"/><rect x="28.5" y="23.6" width="3.4" height="1.6" fill="#e88a30"/>
<rect x="47.5" y="23.4" width="5" height="1.2" fill="#d8dcd8"/><rect x="53.5" y="23.6" width="3.4" height="1.6" fill="#e88a30"/>
<rect x="1" y="23.6" width="3.4" height="1.4" fill="#e88a30"/>
<rect x="73.5" y="23" width="3.6" height="3.4" fill="#d8dcd8"/><rect x="78" y="23" width="2.6" height="3.4" fill="#40a080"/><rect x="81.5" y="23" width="3" height="3.4" fill="#d8dcd8"/>
<!-- gantry pillars -->
<path d="M11.5 32h6l-2.5 15h-6z" fill="#e6e9e8"/>
<path d="M61.5 31.5h7l1 15.5h-7.6z" fill="#e6e9e8"/>
<path d="M90.5 32h6.5l-3.6 10z" fill="#e6e9e8"/>
<rect x="38" y="32" width="3.6" height="14" fill="#b8a040"/>
<rect x="39.2" y="6" width="0.9" height="48" fill="#3a3e3c"/>
<!-- booths and barriers -->
<rect x="2" y="49" width="11" height="6.5" rx="1" fill="#c8a83c"/><rect x="5" y="51.5" width="3.6" height="3" fill="#c03a3a"/>
<rect x="34.5" y="51" width="9" height="4.6" rx="1" fill="#c8a83c"/><rect x="37.4" y="52" width="3" height="2.6" fill="#c03a3a"/>
<rect x="60" y="49" width="11" height="6.5" rx="1" fill="#c8a83c"/><rect x="64" y="51.5" width="3.4" height="2.8" fill="#c03a3a"/>
<circle cx="39.8" cy="44" r="2.2" fill="#d8d8d8"/><circle cx="39.8" cy="44" r="1.2" fill="#b03030"/>
<rect x="3" y="42.5" width="7" height="3.8" fill="#c8ccc8"/><rect x="52.5" y="44" width="7" height="5" fill="#d0d4d0"/><rect x="63" y="41" width="6" height="3.4" fill="#c0c4c0"/>
<rect x="14" y="52" width="24" height="3.6" fill="#4a4e4c"/><rect x="44" y="52" width="16" height="3.6" fill="#505452"/>
<!-- road markings -->
<g fill="#d4dada" opacity=".85">
<path d="M62 57.5l5 0-2 1.8z"/><path d="M56 64.4l3-2.6 1 .3-3 2.7z"/><path d="M52 68.4l3-2.5 1.2.4-3.2 2.7z"/><path d="M46.5 73.6l4.4-2.8 1.6.6-4.6 3z"/><path d="M38.4 80l6-3.4 2 .7-6 3.6z"/><path d="M27 88l7.6-4 2.6.9-7.6 4.2z"/><path d="M13 96l8.2-3 2.8.8-8.6 3.2z"/>
<path d="M20 65l4-1.2.8.4-4 1.3z"/><path d="M27.5 62.5l3.4-1.1.7.3-3.4 1.2z"/><path d="M33.5 60.5l3-.9.6.3-3 1z"/><path d="M9.5 68.6l4-1.2 1 .4-4 1.3z"/><path d="M0.5 71.6l3.6-1 1 .4-3.8 1.2z"/>
</g>
<!-- distant cars -->
<path d="M77 50q0-6 4.500-7h9q3.500 0 4.500 7v9H77z" fill="#2a2e2e"/>
<rect x="78.5" y="43.2" width="12" height="1.3" fill="#c85a28"/>
<rect x="78" y="46" width="12" height="5.5" rx="1" fill="#4a5252"/>
<rect x="75.6" y="53.5" width="4" height="2" fill="#d85a28"/>
<path d="M74 57q0-4 4-4.5h10v14H74z" fill="#1e2222"/><rect x="75" y="61.5" width="9" height="1.2" fill="#a83a28"/>
<path d="M76 54.5h7.5q1.8 1 1.8 3.5v2.5H75.4q-.8-3 .6-6z" fill="#3a4444"/>
<!-- main car -->
<path d="M148 24.5H118q-8 0-11.5 6L92 53q-7 6-8 18l-1 27h65z" fill="url(#car)"/>
<path d="M148 24.5H118q-8 0-11.5 6L94 50l6-2 10-17q2-3.6 8-3.8h30z" fill="#3a4040"/>
<path d="M148 31h-28q-6 0-8 4.5L104 55q9 2.6 22 2.6h22z" fill="#2c3636"/>
<path d="M148 33h-26q-4 0-6 3.600l-7 16.600q8 2 20 2h19z" fill="#3c4a47"/>
<rect x="122" y="37.5" width="22" height="2.4" fill="#aeb8b6" opacity=".8"/><rect x="125" y="42" width="17" height="1.6" fill="#8a9694" opacity=".8"/><rect x="126" y="44.6" width="8" height="1.2" fill="#e07030"/>
<path d="M104 57q10 2.4 22 2.4h22V66q-24 .6-46-2z" fill="#cfd3d3"/>
<path d="M84 70q1-10 7-15l3 34-2 9h-8z" fill="#4a5252"/>
<path d="M95.6 65.5q.6-2.4 3-2.4l22 .4q7.6.6 10 10.8-1 .8-3 .7l-31-.6q-1.4 0-1.6-1.6z" fill="#b83018"/>
<path d="M98 66h10v7H98zM111.5 66.4h9q4.400 .8 5.600 6.400l-14.600-.2z" fill="#f07828"/>
<path d="M100.500 68.400h5.500v3h-5.500zM114 68.600h6.500v3H114z" fill="#c23a1c"/>
<path d="M108.8 63.400l1.600 0 .2 12-1.600 0z" fill="#6a7070"/>
<path d="M110 75q1 12 2 14t8 2l28 1v6h-38q-1.600-10-1.600-23z" fill="#7d8384"/>
<path d="M120 81q10 7 28 8" fill="none" stroke="#b8bcbc" stroke-width="2.400"/>
<rect x="141" y="81.500" width="7" height="9" rx="1" fill="#e8ecee"/><rect x="142.200" y="83" width="2.600" height="6" fill="#2a50a8"/>
<rect x="114" y="88.500" width="9" height="1" fill="#5a6060"/><rect x="114" y="91" width="9" height="1" fill="#5a6060"/>
<rect x="145.600" y="26.500" width="2.400" height="1.800" fill="#f07020"/>
<rect y="95.500" width="148" height="2.500" fill="#1a2020" opacity=".6"/>
</svg>
<div class="b" style="left:1299px;top:733.5px;width:303px;height:6.5px;border-radius:3.5px;background:#595c63"></div>
<div class="b" style="left:21px;top:741px;width:1603px;height:26px;background:#373d49;"></div>
<span class="t" style="left:27px;top:744.5px;line-height:20px;font-size:13px;color:#bbbbbb;letter-spacing:-0.242px;">Run:</span>
<svg class="ic" style="left:72px;top:747px" width="14" height="14" viewBox="0 0 14 14" ><path d="M1.2 4.4 5 .8l2.600 2.400-1.200 1.300 6.800 6.800-1.700 1.700-6.800-6.800-1.200 1.100z" fill="#8f9399"/></svg>
<span class="t" style="left:90px;top:744.5px;line-height:20px;font-size:13px;color:#bbbbbb;letter-spacing:0.093px;">MyApplication [PreviewBuild]</span>
<svg class="ic" style="left:265px;top:750px" width="10" height="10" viewBox="0 0 10 10" ><path d="M1.5 1.5l7 7M8.5 1.5l-7 7" stroke="#6e727a" stroke-width="1.1"/></svg>
<div class="b" style="left:61px;top:765px;width:224px;height:3px;background:#4a88c7;border-radius:1.5px"></div>
<svg class="ic" style="left:1576.5px;top:746px" width="16" height="16" viewBox="0 0 16 16" ><path d="M6.69 3.49 L7.01 1.78 L8.99 1.78 L9.31 3.49 L11.25 4.61 L12.90 4.04 L13.88 5.74 L12.56 6.88 L12.56 9.12 L13.88 10.26 L12.90 11.96 L11.25 11.39 L9.31 12.51 L8.99 14.22 L7.01 14.22 L6.69 12.51 L4.75 11.39 L3.10 11.96 L2.12 10.26 L3.44 9.12 L3.44 6.88 L2.12 5.74 L3.10 4.04 L4.75 4.61Z M8 5.8a2.2 2.2 0 1 0 0 4.4 2.2 2.2 0 1 0 0-4.4z" fill="#afb1b3" fill-rule="evenodd" stroke="#afb1b3" stroke-width="0.6" stroke-linejoin="round"/></svg>
<svg class="ic" style="left:1602.5px;top:746px" width="16" height="16" viewBox="0 0 16 16" ><rect x="2" y="7" width="12" height="2" fill="#afb1b3"/></svg>
<div class="b" style="left:21px;top:767px;width:28px;height:389px;background:#38393b;"></div>
<div class="b" style="left:49px;top:767px;width:1px;height:389px;background:#2e2f31;"></div>
<div class="b" style="left:50px;top:767px;width:28px;height:389px;background:#38393b;"></div>
<div class="b" style="left:78px;top:767px;width:1px;height:389px;background:#2e2f31;"></div>
<svg class="ic" style="left:28px;top:774.5px" width="15" height="15" viewBox="0 0 16 16" ><path d="M3.2 2 13.200 8 3.200 14z" fill="#4c9c4c"/></svg>
<svg class="ic" style="left:26.5px;top:800px" width="16" height="16" viewBox="0 0 16 16" ><path d="M14.600 3.800 12 6.400 9.600 4 12.200 1.400A4.200 4.200 0 0 0 6.700 6.600L1.300 12a1.900 1.900 0 0 0 2.700 2.700L9.400 9.300a4.200 4.200 0 0 0 5.200-5.500z" fill="#afb1b3"/></svg>
<div class="b" style="left:25px;top:824px;width:20px;height:1px;background:#4c4e50;"></div>
<svg class="ic" style="left:29.5px;top:836px" width="10" height="10" viewBox="0 0 10 10" ><rect width="10" height="10" fill="#515355"/></svg>
<div class="b" style="left:25px;top:857px;width:20px;height:1px;background:#4c4e50;"></div>
<svg class="ic" style="left:27.5px;top:868px" width="14" height="12" viewBox="0 0 14 12" ><rect x="1" y="1" width="5.400" height="4.400" fill="#afb1b3"/><rect x="7.600" y="1" width="5.400" height="4.400" fill="#afb1b3"/><rect x="1" y="6.600" width="12" height="4.400" fill="#afb1b3"/></svg>
<div class="b" style="left:25px;top:890px;width:20px;height:1px;background:#4c4e50;"></div>
<svg class="ic" style="left:26.5px;top:899px" width="16" height="16" viewBox="0 0 16 16" ><path d="M9.600 1.200 14.800 6.400 13.600 7.600 12.600 7.200 9.800 10 10 12.600 8.800 13.800 5.600 10.600 1.600 14.600 1 14.800 1.400 14 5.400 10.400 2.200 7.200 3.400 6 6 6.200 8.800 3.400 8.400 2.400z" fill="#afb1b3"/></svg>
<svg class="ic" style="left:56.5px;top:775.5px" width="14" height="14" viewBox="0 0 14 14" ><path d="M7 12.500V2.500M2.800 6.600 7 2.300l4.200 4.300" fill="none" stroke="#5a5c5e" stroke-width="1.800"/></svg>
<svg class="ic" style="left:56.5px;top:801.5px" width="14" height="14" viewBox="0 0 14 14" ><path d="M7 1.500v10M2.800 7.400 7 11.700l4.200-4.300" fill="none" stroke="#5a5c5e" stroke-width="1.800"/></svg>
<svg class="ic" style="left:55.5px;top:828.5px" width="16" height="14" viewBox="0 0 16 14" ><path d="M2 1.500h12M2 6h9.500a2.400 2.400 0 0 1 0 5H8.500M2 10.800h2.500" fill="none" stroke="#afb1b3" stroke-width="1.500"/><path d="M9.800 8.200v5.200L6.800 10.800z" fill="#afb1b3"/></svg>
<div class="b" style="left:53px;top:850px;width:22px;height:22px;border-radius:3px;background:#4e5254"></div>
<svg class="ic" style="left:55.5px;top:854px" width="16" height="14" viewBox="0 0 16 14" ><path d="M1.500 2h5M1.500 6.500h5M1.500 12h13" fill="none" stroke="#afb1b3" stroke-width="1.600"/><path d="M11 .5v6" stroke="#afb1b3" stroke-width="1.600"/><path d="M7.600 5.200h6.800L11 9.400z" fill="#afb1b3"/></svg>
<svg class="ic" style="left:55.5px;top:880.5px" width="16" height="14" viewBox="0 0 16 14" ><rect x="4" y=".5" width="8" height="3" fill="#afb1b3"/><path d="M1 4.500h14v6h-2.500v-3h-9v3H1z" fill="#afb1b3"/><rect x="4.700" y="8.800" width="6.600" height="4.200" fill="none" stroke="#afb1b3" stroke-width="1.300"/><rect x="11.800" y="5.800" width="1.600" height="1.300" fill="#38393b"/></svg>
<svg class="ic" style="left:56.5px;top:904.5px" width="14" height="16" viewBox="0 0 14 16" ><rect x="5" y=".8" width="4" height="2" fill="#afb1b3"/><rect x="2" y="2.400" width="10" height="2" fill="#afb1b3"/><path d="M3 5.400h8V15H3z" fill="#afb1b3"/></svg>
<div class="b" style="left:79px;top:767px;width:1531px;height:388px;background:#262626;"></div>
<div class="b" style="left:1610px;top:767px;width:14px;height:388px;background:#37383a;"></div>
<div class="b" style="left:1613px;top:771px;width:8px;height:366px;border-radius:4px;background:#474849"></div>
<div class="b" style="left:90px;top:1142px;width:1533px;height:13px;background:#353638;"></div>
<div class="b" style="left:93px;top:1143.500px;width:920px;height:9px;border-radius:4.500px;background:#4c4e50"></div>
<div class="b" style="left:21px;top:1155px;width:1603px;height:1px;background:#2e2f31;"></div>
<div class="b" style="left:79px;top:767px;width:1531px;height:375px;overflow:hidden">
<div class="con" style="left:11px;top:1px"><span style="color:#cacaca">/Users/muwentao/nodejs/bin/node /Users/muwentao/.hvigor/project_caches/3b03936173dc151f5526c66ff477f68e/workspace/node_modules/@ohos/hvigor/bin/hvigor.js --mode module -p module=entry@default product=default</span></div>
<div class="con" style="left:11px;top:23px"><span style="color:#cacaca">&gt; hvigor </span><span style="color:#5a932f">UP-TO-DATE :entry:default@PreBuild...</span></div>
<div class="con" style="left:11px;top:45px"><span style="color:#cacaca">&gt; hvigor </span><span style="color:#5a932f">UP-TO-DATE :entry:default@MergeProfile...</span></div>
<div class="con" style="left:11px;top:67px"><span style="color:#cacaca">&gt; hvigor </span><span style="color:#5a932f">UP-TO-DATE :entry:default@GenerateLoaderJson...</span></div>
<div class="con" style="left:11px;top:89px"><span style="color:#cacaca">&gt; hvigor </span><span style="color:#5a932f">UP-TO-DATE :entry:default@ProcessProfile...</span></div>
<div class="con" style="left:11px;top:111px"><span style="color:#cacaca">&gt; hvigor </span><span style="color:#5a932f">Finished :entry:default@PreviewProcessResource... after 3 ms</span></div>
<div class="con" style="left:11px;top:133px"><span style="color:#cacaca">&gt; hvigor </span><span style="color:#5a932f">UP-TO-DATE :entry:default@PreviewCompileResource...</span></div>
<div class="con" style="left:11px;top:155px"><span style="color:#cacaca">&gt; hvigor </span><span style="color:#5a932f">Finished :entry:default@PreviewHookCompileResource... after 1 ms</span></div>
<div class="con" style="left:11px;top:177px"><span style="color:#cacaca">&gt; hvigor </span><span style="color:#5a932f">Finished :entry:default@ReplacePreviewerPage... after 1 ms</span></div>
<div class="con" style="left:11px;top:199px"><span style="color:#cacaca">&gt; hvigor </span><span style="color:#5a932f">Finished :entry:buildPreviewerResource... after 1 ms</span></div>
<div class="con" style="left:11px;top:221px"><span style="color:#cacaca">&gt; hvigor </span><span style="color:#5a932f">Finished :entry:default@PreviewUpdateAssets... after 1 ms</span></div>
<div class="con" style="left:11px;top:243px"><span style="color:#cacaca">&gt; hvigor </span><span style="color:#5a932f">Finished :entry:default@PreviewArkTS... after 2 s 167 ms</span></div>
<div class="con" style="left:11px;top:265px"><span style="color:#cacaca">&gt; hvigor </span><span style="color:#5a932f">Finished :entry:PreviewBuild... after 1 ms</span></div>
<div class="con" style="left:11px;top:287px"><span style="color:#cacaca">&gt; hvigor </span><span style="color:#5a932f">BUILD SUCCESSFUL in 2 s 242 ms</span></div>
<div class="con" style="left:11px;top:331px"><span style="color:#cacaca">Process finished with exit code 0</span></div>
</div>
<div class="b" style="left:0px;top:1156px;width:1645px;height:22px;background:#38393b;"></div>
<div class="b" style="left:138px;top:1156px;width:55px;height:22px;background:#2b2c2e;"></div>
<svg class="ic" style="left:34px;top:1161px" width="12" height="12" viewBox="0 0 12 12" ><circle cx="3" cy="2.400" r="1.500" fill="none" stroke="#afb1b3" stroke-width="1.200"/><circle cx="3" cy="9.600" r="1.500" fill="none" stroke="#afb1b3" stroke-width="1.200"/><circle cx="9.200" cy="3.600" r="1.500" fill="none" stroke="#afb1b3" stroke-width="1.200"/><path d="M3 4v4M9.200 5.200c0 2.400-6.200 1.200-6.200 3.200" fill="none" stroke="#afb1b3" stroke-width="1.200"/></svg>
<span class="t" style="left:51px;top:1156.6px;line-height:20px;font-size:11px;color:#bbbbbb;letter-spacing:0.085px;">Version Control</span>
<svg class="ic" style="left:148.5px;top:1162px" width="10" height="10" viewBox="0 0 10 10" ><path d="M1.500.8 9.200 5 1.500 9.200z" fill="#c4c6c8"/></svg>
<span class="t" style="left:165px;top:1156.6px;line-height:20px;font-size:11px;color:#ffffff;font-weight:bold;-webkit-text-stroke:0;letter-spacing:-0.297px;">Run</span>
<svg class="ic" style="left:204px;top:1162px" width="12" height="10" viewBox="0 0 12 10" ><path d="M0 1.500h2M0 5h2M0 8.500h2M3.600 1.500H12M3.600 5H12M3.600 8.500H12" stroke="#afb1b3" stroke-width="1.500"/></svg>
<span class="t" style="left:220px;top:1156.6px;line-height:20px;font-size:11px;color:#bbbbbb;letter-spacing:-0.270px;">TODO</span>
<svg class="ic" style="left:270.5px;top:1161px" width="12" height="12" viewBox="0 0 12 12" ><circle cx="6" cy="6" r="5.400" fill="#afb1b3"/><rect x="5.200" y="2.600" width="1.600" height="4.400" fill="#38393b"/><rect x="5.200" y="8" width="1.600" height="1.600" fill="#38393b"/></svg>
<span class="t" style="left:287px;top:1156.6px;line-height:20px;font-size:11px;color:#bbbbbb;letter-spacing:0.004px;">Problems</span>
<svg class="ic" style="left:354px;top:1162px" width="12" height="10" viewBox="0 0 12 10" ><rect width="12" height="10" fill="#afb1b3"/><path d="M2.200 2.600 5 5 2.200 7.400M6 7.600h3.600" fill="none" stroke="#38393b" stroke-width="1.200"/></svg>
<span class="t" style="left:371px;top:1156.6px;line-height:20px;font-size:11px;color:#bbbbbb;letter-spacing:0.115px;">Terminal</span>
<svg class="ic" style="left:431.5px;top:1161px" width="16" height="11" viewBox="0 0 16 11" ><path d="M1.300 10.400A7 7 0 0 1 14.700 10.400" fill="none" stroke="#afb1b3" stroke-width="1.700"/><path d="M7 9.600 11.600 4.200" stroke="#afb1b3" stroke-width="1.700"/></svg>
<span class="t" style="left:452px;top:1156.6px;line-height:20px;font-size:11px;color:#bbbbbb;letter-spacing:0.082px;">Profiler</span>
<svg class="ic" style="left:506px;top:1161px" width="12" height="12" viewBox="0 0 12 12" ><path d="M.500 1.600h11v10H.500z" fill="#afb1b3"/><path d="M2.800 0v3M9.200 0v3" stroke="#afb1b3" stroke-width="1.400"/><path d="M2.400 5h7.200M2.400 7.400h7.200M2.400 9.800h7.200" stroke="#38393b" stroke-width="1.100"/></svg>
<span class="t" style="left:523px;top:1156.6px;line-height:20px;font-size:11px;color:#bbbbbb;letter-spacing:0.214px;">Log</span>
<svg class="ic" style="left:560px;top:1161px" width="12" height="12" viewBox="0 0 12 12" ><circle cx="5.400" cy="5.400" r="4.400" fill="none" stroke="#afb1b3" stroke-width="1.400"/><path d="M8.600 8.600l3 3" stroke="#afb1b3" stroke-width="1.600"/><path d="M3.400 5.400 5 7l2.600-3" fill="none" stroke="#afb1b3" stroke-width="1.100"/></svg>
<span class="t" style="left:577px;top:1156.6px;line-height:20px;font-size:11px;color:#bbbbbb;letter-spacing:0.148px;">Code Linter</span>
<svg class="ic" style="left:656px;top:1161px" width="13" height="12" viewBox="0 0 13 12" ><path d="M3.300 .400h6.400L12.900 6 9.700 11.600H3.300L.100 6z" fill="#afb1b3"/><path d="M5 3.400 9.200 6 5 8.600z" fill="#38393b"/></svg>
<span class="t" style="left:673px;top:1156.6px;line-height:20px;font-size:11px;color:#bbbbbb;letter-spacing:0.039px;">Services</span>
<svg class="ic" style="left:739.5px;top:1161px" width="10" height="12" viewBox="0 0 10 12" ><path d="M.600 .600h8.800v10.800H.600z" fill="none" stroke="#7d8084" stroke-width="1"/><path d="M2.400 3.400h5.200M2.400 6h5.200M2.400 8.600h3.400" stroke="#7d8084" stroke-width="1"/></svg>
<span class="t" style="left:755.5px;top:1156.6px;line-height:20px;font-size:11px;color:#bbbbbb;letter-spacing:-0.022px;">PreviewerLog</span>
<div class="b" style="left:0px;top:1178px;width:1645px;height:21px;background:#38393b;"></div>
<svg class="ic" style="left:6px;top:1182.5px" width="12" height="12" viewBox="0 0 12 12" ><rect x="3" y=".600" width="8.400" height="8.400" fill="none" stroke="#afb1b3" stroke-width="1"/><path d="M.600 3v8.400H9" fill="none" stroke="#afb1b3" stroke-width="1"/></svg>
<span class="t" style="left:31px;top:1178.6px;line-height:20px;font-size:11px;color:#bbbbbb;letter-spacing:0.003px;">Sync project finished in 2 s 209 ... (today 14:59)</span>
<div class="b" style="left:1439.500px;top:1182.500px;width:12px;height:12px;border-radius:50%;background:#3f9e3c"></div>
<span class="t" style="left:1463.5px;top:1178.6px;line-height:20px;font-size:11px;color:#bbbbbb;letter-spacing:-0.105px;">17:1</span>
<span class="t" style="left:1496px;top:1178.6px;line-height:20px;font-size:11px;color:#bbbbbb;letter-spacing:0.078px;">LF</span>
<span class="t" style="left:1520px;top:1178.6px;line-height:20px;font-size:11px;color:#bbbbbb;letter-spacing:0.166px;">UTF-8</span>
<span class="t" style="left:1562px;top:1178.6px;line-height:20px;font-size:11px;color:#bbbbbb;letter-spacing:0.184px;">2 spaces</span>
<svg class="ic" style="left:1619.5px;top:1182.5px" width="12" height="12" viewBox="0 0 12 12" ><rect x="3" y="5.400" width="8" height="6" fill="#afb1b3"/><path d="M4.600 5.400V3.200a2 2 0 0 0-4 0v1.600" fill="none" stroke="#afb1b3" stroke-width="1.300"/></svg>
<div class="b" style="left:0px;top:0px;width:1px;height:1199px;background:#58595b;"></div>
<div class="b" style="left:0px;top:0px;width:1645px;height:1px;background:#6c6d70;"></div>
<div class="b" style="left:1644px;top:0px;width:1px;height:1199px;background:#66676a;"></div>
<div class="b" style="left:0px;top:1198px;width:1645px;height:1px;background:#5c5d60;"></div>
<div class="b" style="left:0px;top:1178px;width:1645px;height:1px;background:#3e3f41;"></div>
</div></body></html>
